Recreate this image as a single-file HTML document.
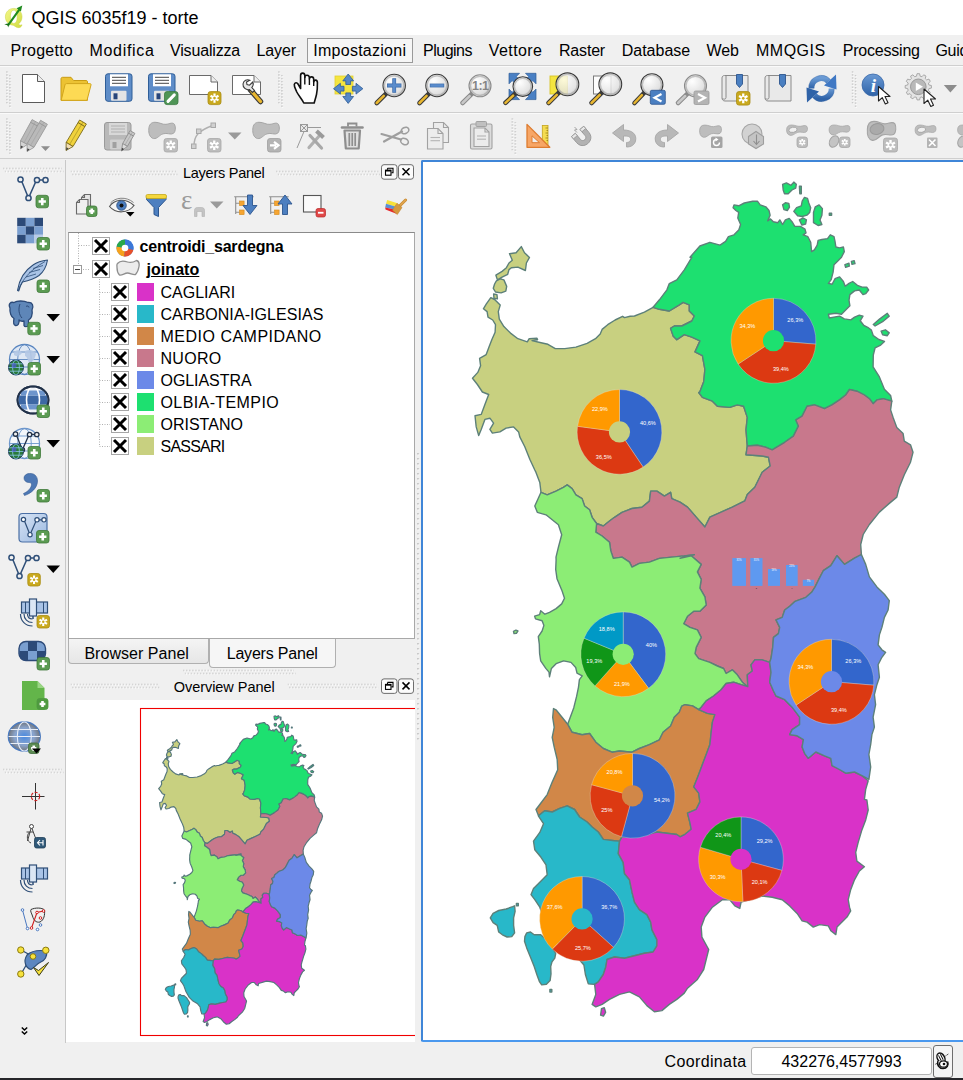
<!DOCTYPE html>
<html><head><meta charset="utf-8"><title>QGIS 6035f19 - torte</title>
<style>
*{box-sizing:border-box;margin:0;padding:0}
html,body{width:963px;height:1080px;overflow:hidden;background:#f0f0f0;font-family:"Liberation Sans","DejaVu Sans",sans-serif;color:#000}
.abs{position:absolute}
#title{left:0;top:0;width:963px;height:35px;background:#fff}
#title span{position:absolute;left:31.5px;top:7.5px;font-size:18px;white-space:nowrap}
#menu{left:0;top:35px;width:963px;height:31px;background:#f0f0f0;border-bottom:1px solid #cfcfcf;box-shadow:0 1px 0 #fafafa}
#menu span{position:absolute;top:7px;font-size:16px;white-space:nowrap}
#impbox{left:306.5px;top:37.5px;width:106px;height:25px;border:1px solid #9a9a9a;background:#f6f6f6}
#tb1{left:0;top:67px;width:963px;height:46px;background:#f0f0f0;border-bottom:1px solid #cfcfcf;box-shadow:0 1px 0 #fafafa}
#tb2{left:0;top:114px;width:963px;height:45px;background:#f0f0f0;border-bottom:1px solid #cfcfcf}
#ltb{left:0;top:160px;width:66px;height:884px;background:#f0f0f0;border-right:1px solid #c8c8c8}
.grip{position:absolute;border-left:2px dotted #c0c0c0;width:4px;border-right:2px dotted #c0c0c0}
.hgrip{position:absolute;height:4px;border-top:1px dotted #b8b8b8;border-bottom:1px dotted #b8b8b8}
#tree{left:68px;top:231.500px;width:347px;height:407px;background:#fff;border:1px solid #a8a8a8;border-top-color:#8a8a8a}
.ptitle{font-size:14.5px;white-space:nowrap}
.row{position:absolute;font-size:16px;white-space:nowrap}
.cb{position:absolute;width:18px;height:18px;border:1px solid #a6a6a6;background:#fff}
.cb svg{position:absolute;left:0;top:0}
.sw{position:absolute;width:17.5px;height:18.5px}
.tab{position:absolute;font-size:15.4px;text-align:center;letter-spacing:.3px}
#ovw{left:66px;top:700px;width:349px;height:342px;background:#fff;overflow:hidden}
#canvas{left:421px;top:160px;width:545px;height:882px;background:#fff;border:2px solid #3f86d8;border-bottom-color:#4a98ee;border-radius:2px}
#status{left:0;top:1043px;width:963px;height:34px;background:#f0f0f0}
#dark{left:0;top:1077.500px;width:963px;height:3px;background:#26262a}
.pl{font-size:5.6px;fill:#fff;text-anchor:middle;font-family:"Liberation Sans",sans-serif}
.btn{position:absolute;width:16px;height:14px;border:1px solid #333;border-radius:3px;background:#fff}
</style></head><body>
<div id="title" class="abs">
<svg class="abs" style="left:3px;top:4px" width="24" height="26" viewBox="3 4 24 26"><defs><linearGradient id="qg" x1="0" y1="0" x2="1" y2="1"><stop offset="0" stop-color="#f4f78a"/><stop offset="1" stop-color="#d0dc40"/></linearGradient></defs><path fill-rule="evenodd" d="M13.800,8.400C18.600,8.400 22,12 22,16.800 22,20 20.600,22.600 18.400,24 19.200,25 20.400,25.600 22,24.800 21.600,27 19.600,28 17.600,27.600 15.800,27.200 14.600,25.800 13.200,25.200 8.600,25 5.400,21.400 5.400,16.800 5.400,12 9,8.400 13.800,8.400ZM13.800,10.200C11.600,10.200 10.400,12.800 10.400,16.800 10.400,20.800 11.600,23.400 13.800,23.400 16,23.400 17.200,20.800 17.200,16.800 17.200,12.800 16,10.200 13.800,10.200Z" fill="url(#qg)" stroke="#c8d23c" stroke-width=".5"/><path d="M8,25.400L20,8.600" stroke="#1f8a1f" stroke-width="2.100"/><path d="M22.300,5.400L16.600,8.200 20.900,11.500Z" fill="#1f8a1f"/><path d="M4.300,24.200L9.200,23.200 8.300,27.600 7.400,25.200Z" fill="#176e17"/></svg>
<span>QGIS 6035f19 - torte</span></div>
<div id="menu" class="abs"><span style="left:10.5px;letter-spacing:0.25px">Progetto</span><span style="left:89.5px;letter-spacing:0.68px">Modifica</span><span style="left:170px;letter-spacing:-0.17px">Visualizza</span><span style="left:256.5px;letter-spacing:-0.11px">Layer</span><span style="left:423px;letter-spacing:-0.50px">Plugins</span><span style="left:488.8px;letter-spacing:0.40px">Vettore</span><span style="left:559px;letter-spacing:-0.19px">Raster</span><span style="left:621.7px;letter-spacing:0.00px">Database</span><span style="left:706.4px;letter-spacing:-0.00px">Web</span><span style="left:756px;letter-spacing:0.49px">MMQGIS</span><span style="left:842.8px;letter-spacing:-0.22px">Processing</span><span style="left:935.5px;letter-spacing:-0.34px">Guida</span></div>
<div id="impbox" class="abs"></div><span class="abs" style="left:313.3px;top:42px;font-size:16px;white-space:nowrap;letter-spacing:0.26px">Impostazioni</span>
<div id="tb1" class="abs"></div>
<div id="tb2" class="abs"></div>
<div id="ltb" class="abs"></div>
<!-- Layers panel -->

<span class="abs ptitle" style="left:183px;top:164.500px;letter-spacing:-0.26px">Layers Panel</span>
<div id="tree" class="abs"></div>
<div id="rows">
<svg class="abs" style="left:68px;top:232px" width="347" height="405" viewBox="68 232 347 405"><g stroke="#b0b0b0" stroke-width="1" stroke-dasharray="1 1.5" fill="none"><path d="M78.500,233V269.500M78.500,245.500H90M83,269.500H90M99.500,279V446.500"/><path d="M99.500,292.5H110"/><path d="M99.500,314.5H110"/><path d="M99.500,336.5H110"/><path d="M99.500,358.5H110"/><path d="M99.500,380.5H110"/><path d="M99.500,402.5H110"/><path d="M99.500,424.5H110"/><path d="M99.500,446.5H110"/></g></svg>
<div class="cb" style="left:91.500px;top:236.500px"><svg width="16" height="16" viewBox="0 0 16 16"><path d="M2 2L14 14M14 2L2 14" stroke="#000" stroke-width="3"/></svg></div>
<svg class="abs" style="left:115.500px;top:239px" width="18" height="18" viewBox="0 0 18 18"><circle cx="9" cy="9" r="8.500" fill="#3b78d8"/><path d="M9 9L9 .5A8.500 8.500 0 0 1 17.300 11z" fill="#3b78d8"/><path d="M9 9L17.300 11A8.500 8.500 0 0 1 8 17.500z" fill="#e8502a"/><path d="M9 9L8 17.500A8.500 8.500 0 0 1 .6 7.500z" fill="#f6a21c"/><path d="M9 9L.6 7.500A8.500 8.500 0 0 1 9 .5z" fill="#2aa84a"/><circle cx="9" cy="9" r="3.300" fill="#fff"/></svg>
<span class="row" style="left:139.500px;top:237.600px;font-weight:bold;letter-spacing:-0.20px">centroidi_sardegna</span>
<div class="abs" style="left:73px;top:265px;width:9px;height:9px;border:1px solid #9a9a9a;background:#fff"><div class="abs" style="left:1px;top:3px;width:5px;height:1px;background:#444"></div></div>
<div class="cb" style="left:91.500px;top:259.500px"><svg width="16" height="16" viewBox="0 0 16 16"><path d="M2 2L14 14M14 2L2 14" stroke="#000" stroke-width="3"/></svg></div>
<svg class="abs" style="left:115px;top:259px" width="26" height="19" viewBox="0 0 26 19"><path d="M2.500 4.500c3-3.500 7-2.500 10-1.500s6.500 0 9-1.500c2 .5 3 3 2.500 6s-1.500 6-3.500 8c-3 .5-5-1.500-8-1.500s-5 2.500-8 2c-2-2-2.500-5-2.500-7.500s-.5-3 .5-4z" fill="#ececec" stroke="#8e8e8e" stroke-width="1.300"/></svg>
<span class="row" style="left:146.500px;top:260.600px;font-weight:bold;text-decoration:underline;letter-spacing:0.05px">joinato</span>
<div class="cb" style="left:111px;top:283px"><svg width="16" height="16" viewBox="0 0 16 16"><path d="M2 2L14 14M14 2L2 14" stroke="#000" stroke-width="3"/></svg></div><div class="sw" style="left:136.500px;top:282.5px;background:#d932c8"></div><span class="row" style="left:160.500px;top:283.8px;letter-spacing:0.01px">CAGLIARI</span>
<div class="cb" style="left:111px;top:305px"><svg width="16" height="16" viewBox="0 0 16 16"><path d="M2 2L14 14M14 2L2 14" stroke="#000" stroke-width="3"/></svg></div><div class="sw" style="left:136.500px;top:304.5px;background:#28b8c9"></div><span class="row" style="left:160.500px;top:305.8px;letter-spacing:0.07px">CARBONIA-IGLESIAS</span>
<div class="cb" style="left:111px;top:327px"><svg width="16" height="16" viewBox="0 0 16 16"><path d="M2 2L14 14M14 2L2 14" stroke="#000" stroke-width="3"/></svg></div><div class="sw" style="left:136.500px;top:326.5px;background:#d18748"></div><span class="row" style="left:160.500px;top:327.8px;letter-spacing:0.50px">MEDIO CAMPIDANO</span>
<div class="cb" style="left:111px;top:349px"><svg width="16" height="16" viewBox="0 0 16 16"><path d="M2 2L14 14M14 2L2 14" stroke="#000" stroke-width="3"/></svg></div><div class="sw" style="left:136.500px;top:348.5px;background:#c8788c"></div><span class="row" style="left:160.500px;top:349.8px;letter-spacing:0.29px">NUORO</span>
<div class="cb" style="left:111px;top:371px"><svg width="16" height="16" viewBox="0 0 16 16"><path d="M2 2L14 14M14 2L2 14" stroke="#000" stroke-width="3"/></svg></div><div class="sw" style="left:136.500px;top:370.5px;background:#6c89e8"></div><span class="row" style="left:160.500px;top:371.8px;letter-spacing:-0.06px">OGLIASTRA</span>
<div class="cb" style="left:111px;top:393px"><svg width="16" height="16" viewBox="0 0 16 16"><path d="M2 2L14 14M14 2L2 14" stroke="#000" stroke-width="3"/></svg></div><div class="sw" style="left:136.500px;top:392.5px;background:#1de070"></div><span class="row" style="left:160.500px;top:393.8px;letter-spacing:0.40px">OLBIA-TEMPIO</span>
<div class="cb" style="left:111px;top:415px"><svg width="16" height="16" viewBox="0 0 16 16"><path d="M2 2L14 14M14 2L2 14" stroke="#000" stroke-width="3"/></svg></div><div class="sw" style="left:136.500px;top:414.5px;background:#8ced75"></div><span class="row" style="left:160.500px;top:415.8px;letter-spacing:0.00px">ORISTANO</span>
<div class="cb" style="left:111px;top:437px"><svg width="16" height="16" viewBox="0 0 16 16"><path d="M2 2L14 14M14 2L2 14" stroke="#000" stroke-width="3"/></svg></div><div class="sw" style="left:136.500px;top:436.5px;background:#c8d080"></div><span class="row" style="left:160.500px;top:437.8px;letter-spacing:-0.77px">SASSARI</span>
</div>
<!-- tabs -->
<div class="tab" style="left:67.500px;top:639px;width:141.500px;height:25px;border:1px solid #b0b0b0;border-top:none;background:linear-gradient(#f4f4f4,#e6e6e6);border-radius:0 0 4px 4px"></div><div class="tab" style="left:208.500px;top:639px;width:127px;height:28.500px;border:1px solid #b0b0b0;border-top:none;background:#f6f6f6;border-radius:0 0 4px 4px"></div><span class="abs" style="left:84.400px;top:644.700px;font-size:16px;white-space:nowrap;letter-spacing:0.04px">Browser Panel</span><span class="abs" style="left:226.700px;top:644.800px;font-size:16px;white-space:nowrap;letter-spacing:-0.20px">Layers Panel</span>


<span class="abs ptitle" style="left:173.700px;top:678.500px;letter-spacing:-0.04px">Overview Panel</span>
<div id="ovw" class="abs">
<svg class="abs" style="left:0;top:0" width="349" height="342" viewBox="66 700 349 342">
<rect x="140.500" y="708.500" width="300" height="327" fill="none" stroke="#f00000" stroke-width="1.1"/>
<g transform="translate(-17.100,647.850) scale(0.372)" stroke="#56777c" stroke-width="3.100" stroke-linejoin="round"><use href="#mapg"/></g>
</svg></div>
<!-- Map canvas -->
<div id="canvas" class="abs">
<svg class="abs" style="left:-2px;top:-2px" width="545" height="882" viewBox="421 160 545 882">
<defs><g id="mapg">
<path fill="#c8d080" d="M490.8,297.6 494.6,299.5 500.2,305.1 498.3,311.6 499.3,319.1 503.9,326.6 510.5,333.1 517.9,338.7 527.3,341.9 529.2,338.7 537,338.2 537.6,339.7 532,340.6 542.2,343 547.9,344.3 555.3,348.6 564.7,348.6 575.9,347.1 587.1,343.4 595.5,338.7 600.2,334.1 602.1,329.4 607.7,324.7 615.1,320 622.6,316.3 624.5,317.6 630.1,316.3 634.5,316 644.4,312.2 653.1,307.3 659.4,309.3 669.3,311 679.3,304.8 683.1,302.3 689.3,304.8 689.3,311 694.3,316 691.8,321 681.8,326 674.3,326 670.6,328.4 673.1,335.9 676.8,339.7 684.3,334.7 691.8,337.2 700,340.9 695,351.9 702.4,355.7 704.9,369.4 703.7,381.8 699.9,391.8 698.7,392.5 702.4,397.4 712.4,401.2 717.4,406.2 729.8,407.4 737.3,404.9 743.6,406.2 747.3,417.4 746,429.8 747.3,446 746,454.8 762.2,456 768.5,457.3 770.2,466 762.2,472.2 758.5,479.7 754.8,487.2 747.3,494.6 744.8,500.9 732.3,507.1 721.1,512.1 709.9,517.1 704.9,527 696.2,517.1 687.5,507.1 680,502.1 671.8,498.6 670.6,492.3 664.4,496.1 656.9,491.1 650.7,491.1 649.4,501.1 641.9,507.3 632,508.5 622,512.3 614.5,517.3 609.5,521 603.3,526 596.6,523.5 592.1,517.3 589.6,509.8 584.6,506 582.1,498.6 575.9,494.8 572.1,488.6 567.2,484.9 563.4,487.4 556,491.1 547.2,494.8 541,492.3 539.8,482.4 536,472.4 534.8,470 529.8,459.3 524.8,446.8 519.8,436.9 518.6,431.9 513.6,426.9 506.1,428.1 499.9,431.9 492.4,433.1 489.9,429.4 493.6,423.1 489.9,418.2 484.9,419.4 481.2,429.4 478.7,435.6 476.2,426.9 475,415.7 481.2,414.4 484.9,404.5 488.7,394.5 482.4,392 477.4,384.5 472.5,378.3 477.8,372.4 480.6,365.8 479.6,358.4 486.2,354.6 489,347.1 491.8,339.7 495.1,332.2 495.5,324.7 492.7,320 488,317.2 487.1,311.6 483.4,308.8 486.2,304.2Z M521.3,246.6 524.5,252.8 529.5,257.4 526.4,263 525.4,270.5 517.9,267.1 511.4,267.7 509,269.6 507.7,274.3 502.1,277.1 497.4,279.9 495.9,275.2 502.1,271.4 506.4,267.7 509,263 512.3,260.2 509.5,253.7 516.1,252.8Z M496.4,280.8 500.2,278.9 503.9,279.9 506.7,286.4 505.8,291.1 501.1,292.9 495.5,292 493.3,288.3 494.6,284Z M493.6,293.9 497,294.8 497.4,298.9 494,298.2Z"/>
<path fill="#1de070" d="M653.1,307.3 659.4,299.8 666.9,289.8 669.3,283.6 676.8,279.8 684.3,269.9 691.8,257.4 690,257.2 699.9,246 709.9,242.3 720,245.1 725.6,241.4 728.4,236.7 734,234.8 738.7,230.1 740.6,224.5 737.8,218 738.7,212.4 735.9,210.5 733.1,207.7 734,204.9 738.7,205.8 744.3,203 752.7,201.2 757.4,201.2 760.2,204.9 765.8,206.8 769,210.5 770.1,215.2 767.7,220.8 770.5,218.9 773.3,221.7 777.9,222.7 779.8,219.9 782.6,224.5 785.4,219.9 789.2,218.4 792,221.7 794.8,226.4 800.4,226.4 805,229.2 806,232.9 803.2,234.8 807.9,236.7 810.7,242.3 811.6,251.6 814.4,249.8 817.2,245.1 818.1,240.4 821.9,239.5 827.5,238.6 830.3,234.8 834,236.7 835,241.4 835.9,247 839.6,247.9 843.4,247 844.3,251.6 841.5,257.2 837.8,261 834,264.7 833.1,272.2 831.2,279.7 828.4,283.4 832.1,284.3 835,278.7 839.6,276.9 843.4,281.5 845.2,286.2 849,283.4 852.7,281.5 857.4,285.3 862.1,287.1 866.7,287.1 868.6,290 865.8,293.7 863,294.6 859.3,290 854.6,290.9 849.9,294.6 849,300.2 849.9,305.8 845.2,310.5 841.5,314.3 835.9,313.3 828.4,314.3 829.3,318 839.6,316.1 844.3,318.9 850.8,319.9 854.6,317.1 859.3,315.2 863,316.1 860.2,320.8 863.9,325.5 867.7,327.3 871.4,330.1 873.3,335.7 878.9,339.5 884.5,341.4 880.7,345.1 875.1,347.9 873.3,355 873.1,366.9 879.4,376.9 884.4,389.3 890.6,395.5 891.8,401.2 883.1,398.7 876.9,399.9 873.1,403.7 869.4,398.7 864.4,395 856.9,391.2 849.5,389.5 845.7,395 839.5,399.9 832,404.9 824.5,408.7 814.6,404.9 807.1,406.2 802.1,416.1 795.9,419.9 798.4,426.1 793.4,436.1 784.7,442.3 772.2,449.8 766,447.3 757.3,445.3 747.3,446 746,429.8 747.3,417.4 743.6,406.2 737.3,404.9 729.8,407.4 717.4,406.2 712.4,401.2 702.4,397.4 698.7,392.5 699.9,391.8 703.7,381.8 704.9,369.4 702.4,355.7 695,351.9 700,340.9 691.8,337.2 684.3,334.7 676.8,339.7 673.1,335.9 670.6,328.4 674.3,326 681.8,326 691.8,321 694.3,316 689.3,311 689.3,304.8 683.1,302.3 679.3,304.8 669.3,311 659.4,309.3 653.1,307.3Z M782.6,184.3 786.4,182.9 791,185.3 793.8,182.1 796.3,184.3 795.7,188.1 792,190 788.2,193.7 784.5,193.7 783.2,190Z M782.6,204.9 785.4,202.7 788.8,203.4 789.5,207.1 787.3,210.5 783.9,209.6Z M793.8,211.4 796.6,207.7 801.3,205.8 802.2,201.2 804.5,197.4 807.5,198.4 808.8,203 810.7,207.7 809.7,212.4 806.9,215.2 802.2,216.5 797.6,215.7Z M813.5,212.4 815.3,206.8 819.1,204.9 822.4,208.6 821.9,215.2 820,219.9 821.9,224.5 818.1,225.5 813.5,222.7Z M799.4,219.9 803.2,218 806.4,219.9 805.6,224 801.9,225.1Z M844.9,264.7 849,263.2 849.3,266.2 845.6,267.3Z M851.4,261.4 854.2,260.6 855,263.6 852,264.3Z M873.3,324.5 879.8,318.9 887.3,313.3 889.2,316.1 882.6,321.7 875.1,326Z M881.1,331.1 885.4,329.8 889.2,332.9 887.3,335.7 882.6,334.8Z M799.4,186.2 801.3,186.2 801.3,193.7 799.8,193.7Z M829.3,213.3 831.6,213.3 831.6,215.2 829.3,215.2Z"/>
<path fill="#c8788c" d="M747.3,446 757.3,445.3 766,447.3 772.2,449.8 784.7,442.3 793.4,436.1 798.4,426.1 795.9,419.9 802.1,416.1 807.1,406.2 814.6,404.9 824.5,408.7 832,404.9 839.5,399.9 845.7,395 849.5,389.5 856.9,391.2 864.4,395 869.4,398.7 873.1,403.7 876.9,399.9 883.1,398.7 891.8,401.2 890.6,409.9 893.1,417.4 896.8,427.4 903.1,433.6 904.3,441.1 910.5,444.8 913,452.3 910.5,462.2 904.3,474.7 899.3,487.2 896.8,497.1 889.3,503.4 879.4,512.1 869.4,524.5 863.2,534.5 860.7,544.5 861.4,554.5 854.5,558.2 844.5,564.4 837,555.7 830.8,565.7 823.3,570.7 818.8,579.4 815.1,586.9 811.6,592.3 805.9,597.3 795.1,601.3 789.7,606.2 784.7,610 782.2,617.4 776,619.9 779.7,627.4 778.4,633.6 773.5,637.4 772.7,647.4 771,658.6 769.7,662.3 762.2,659.8 754.8,659.8 751,664.8 752.3,671 747.3,674.8 747.8,686.7 742.3,682.2 737.3,674.8 732.3,669.8 726.1,673.5 723.6,668.5 717.4,666 709.9,662.3 698.7,658.6 695,653.6 696.2,647.4 701.2,637.4 697.4,629.9 690,627.4 683.7,623.7 687.5,616.2 693.7,611.2 699.9,611.2 706.2,605 704.9,596.8 699.9,588.1 701.2,579.4 697.4,571.9 701.2,564.4 691.2,555.7 680,558.2 694.3,554.6 684.3,555.9 671.8,557.1 659.4,558.4 649.4,562.1 639.4,563.4 632,567.1 629.5,562.1 622,557.1 613.3,558.4 610.8,550.9 609.5,542.2 602.1,536 595.8,532.2 596.6,523.5 603.3,526 609.5,521 614.5,517.3 622,512.3 632,508.5 641.9,507.3 649.4,501.1 650.7,491.1 656.9,491.1 664.4,496.1 670.6,492.3 671.8,498.6 680,502.1 687.5,507.1 696.2,517.1 704.9,527 709.9,517.1 721.1,512.1 732.3,507.1 744.8,500.9 747.3,494.6 754.8,487.2 758.5,479.7 762.2,472.2 770.2,466 768.5,457.3 762.2,456 746,454.8 747.3,446Z"/>
<path fill="#8ced75" d="M541,492.3 534.8,506 537.3,512.3 546,514.8 552.2,519.8 558.4,524.7 561.7,534.7 558.4,547.2 556,557.1 556.1,560 555.7,569.3 557,578.7 561.7,589.9 564.5,598.3 561.7,603.9 556.1,608.6 549.5,612.3 544.9,614.2 540.7,610.8 539.6,614.6 534.6,616.1 535.5,618.9 542.1,620.7 543.9,625.4 542.1,631 538.3,636.6 539.3,644.1 539.6,653.5 540.7,660.9 545.8,668.4 549,672.1 549.5,676.8 551.4,668.4 556.1,663.7 563.6,660.9 571,662.4 575.7,667.5 577,673.1 582.2,675.9 579.4,679.6 578.5,687.1 576.6,696.4 573.8,707.7 567.7,724.3 572.1,732.3 582.1,734.8 589.6,733.5 595.8,742.2 603.3,748.5 612,752.2 619.5,751 632,752.2 639.4,748.5 649.4,744.7 659.4,739.8 663.1,732.3 670.6,726 674.3,717.3 679.3,712.3 681.8,706.1 685,704.7 692.5,705.9 698.7,709.7 701.2,707.2 706.2,700.9 713.6,696 721.1,689.7 726.1,683.5 733.6,682.2 741.1,684.7 747.8,686.7 742.3,682.2 737.3,674.8 732.3,669.8 726.1,673.5 723.6,668.5 717.4,666 709.9,662.3 698.7,658.6 695,653.6 696.2,647.4 701.2,637.4 697.4,629.9 690,627.4 683.7,623.7 687.5,616.2 693.7,611.2 699.9,611.2 706.2,605 704.9,596.8 699.9,588.1 701.2,579.4 697.4,571.9 701.2,564.4 691.2,555.7 680,558.2 694.3,554.6 684.3,555.9 671.8,557.1 659.4,558.4 649.4,562.1 639.4,563.4 632,567.1 629.5,562.1 622,557.1 613.3,558.4 610.8,550.9 609.5,542.2 602.1,536 595.8,532.2 596.6,523.5 592.1,517.3 589.6,509.8 584.6,506 582.1,498.6 575.9,494.8 572.1,488.6 567.2,484.9 563.4,487.4 556,491.1 547.2,494.8 541,492.3Z M513.5,631.4 515.9,630.1 517.9,631 516.4,633.3 514,633.6Z"/>
<path fill="#d18748" d="M567.7,724.3 556,709.8 553.5,708.6 552.7,717.3 554.2,727.3 552.2,737.3 554.2,747.2 557.2,759.7 557.7,769.7 552.2,782.1 547.2,794.6 539.8,804.5 536,809.5 538.5,815.8 544.7,810.8 552.2,812 559.7,808.3 567.2,805.8 574.6,809.5 579.6,817 587.1,822 592.1,827 598.3,832 603.3,839.4 614.5,840.7 619.5,841.4 622,836.9 634.5,837.4 646.9,834.5 656.9,832 666.9,833.2 676.8,834.5 680,836.8 685,834.3 691.2,829.3 690,823.1 687.5,813.1 696.2,809.3 699.9,801.9 698.7,793.1 693.7,786.9 698.7,774.5 702.4,764.5 706.2,754.5 709.9,744.5 711.2,732.1 712.4,722.1 714.9,714.6 707.4,713.4 698.7,709.7 692.5,705.9 685,704.7 681.8,706.1 679.3,712.3 674.3,717.3 670.6,726 663.1,732.3 659.4,739.8 649.4,744.7 639.4,748.5 632,752.2 619.5,751 612,752.2 603.3,748.5 595.8,742.2 589.6,733.5 582.1,734.8 572.1,732.3 567.7,724.3Z"/>
<path fill="#28b8c9" d="M538.5,816.2 543.5,823.7 539.8,832.4 533.5,841.1 534.8,849.8 541,857.3 546,864.8 547.2,874.8 539.8,882.2 533.5,888.5 531,894.7 534.8,899.7 539.8,907.2 546,924.6 554.7,939.6 564.7,949.5 577.1,957 583.9,965 585.4,974.5 588.3,983.9 594.6,984.4 598.3,981.9 603.3,974.5 605.8,967 607,959.5 614.5,957 624.5,958.3 634.5,955.8 644.4,953.3 653.1,952 656.9,945.8 656.9,939.6 651.9,929.6 650.7,922.1 646.9,914.6 639.4,909.7 634.5,902.2 632,892.2 629.5,879.8 624.5,873.5 623.2,862.3 618.3,853.6 619.5,841.1 614.5,840.7 603.3,839.4 598.3,832 592.1,827 587.1,822 579.6,817 574.6,809.5 567.2,805.8 559.7,808.3 552.2,812 544.7,810.8 538.5,815.8Z M524.9,936.6 526.7,932.9 530.5,932 534.2,934.8 540.7,934.8 547.3,940.4 553.3,949.3 555.7,953.5 554.8,958.1 552,961.9 550.7,966.5 551,974 550.1,980.6 546.4,984.3 541.7,984.9 539.4,981.5 537,975 534.2,966.5 530.5,957.2 526.7,947.9 524.5,941.3Z M490.3,917.9 493.1,913.3 498.7,910.5 506.2,909 512.7,906.7 514.6,905.8 515.1,911.4 513.6,917.9 513.6,925.4 514.6,932.9 511.8,936.6 507.1,937 502.4,934.8 498.7,932 497.2,925.4 493.1,922.6Z M516.4,903.4 518.3,903.4 518.3,905.8 516.4,905.8Z M549.9,989.5 551.8,989.5 551.8,992.1 549.9,992.1Z"/>
<path fill="#d932c8" d="M594.6,984.4 595.8,994.4 592.1,1004.4 595.8,1006.9 602.1,1004.4 609.5,999.4 619.5,994.4 629.5,991.9 639.4,996.9 646.9,1005.6 654.4,1011.8 661.9,1010.6 669.3,1004.4 676.8,999.4 684.3,993.1 687.5,988.2 697.4,979.4 703.7,969.5 706.2,959.5 708.7,949.5 701.9,937.1 701.2,927.1 704.9,917.1 712.4,907.2 722.4,899.7 729.8,899.7 734.8,905.9 739.8,908.4 741.1,902.2 762.2,896 772.2,897.2 782.2,899.7 789.7,905.9 797.1,913.4 802.1,920.9 807.1,922.1 813.3,927.1 819.6,924.6 828.3,925.9 830.8,930.8 835.8,934.6 837,927.1 842,922.1 847,917.1 850.7,910.9 849.5,907.2 848.2,899.7 850.7,889.7 854.5,879.8 859.4,871 864.4,866.8 856.9,861.1 855.7,852.3 858.2,842.4 861.9,829.9 865.7,819.9 868.2,810 866.9,800 864.4,799.4 865.7,789.4 868.2,780.7 861.9,775.7 854.5,772 845.7,773.2 839.5,769.5 832,765.7 830.8,758.3 824.5,755.8 815.8,752 808.3,758.3 804.6,753.3 802.1,747 803.4,739.6 797.1,735.8 789.7,734.6 792.1,729.6 799.6,724.6 799.6,717.1 792.1,707.2 784.7,699.7 776,696 773.5,691 769.7,682.2 771,672.3 769.7,662.3 762.2,659.8 754.8,659.8 751,664.8 752.3,671 747.3,674.8 747.8,686.7 741.1,684.7 733.6,682.2 726.1,683.5 721.1,689.7 713.6,696 706.2,700.9 701.2,707.2 698.7,709.7 707.4,713.4 714.9,714.6 712.4,722.1 711.2,732.1 709.9,744.5 706.2,754.5 702.4,764.5 698.7,774.5 693.7,786.9 698.7,793.1 699.9,801.9 696.2,809.3 687.5,813.1 690,823.1 691.2,829.3 685,834.3 680,836.8 676.8,834.5 666.9,833.2 656.9,832 646.9,834.5 634.5,837.4 622,836.9 619.5,841.4 618.3,853.6 623.2,862.3 624.5,873.5 629.5,879.8 632,892.2 634.5,902.2 639.4,909.7 646.9,914.6 650.7,922.1 651.9,929.6 656.9,939.6 656.9,945.8 653.1,952 644.4,953.3 634.5,955.8 624.5,958.3 614.5,957 607,959.5 605.8,967 603.3,974.5 598.3,981.9 594.6,984.4Z M601.5,1008.6 604.3,1007.7 605.6,1012.3 603.4,1016.1 600.6,1015.1Z"/>
<path fill="#6c89e8" d="M861.4,554.5 865.7,564.4 869.4,576.9 876.9,586.9 884.4,594.3 889.3,600.6 888.1,610 884.4,617.4 881.9,627.4 879.4,634.9 878.1,644.9 881.9,649.8 885.6,652.3 881.9,657.3 878.1,664.8 879.4,677.3 876.9,684.7 874.4,694.7 875.6,704.7 873.1,717.1 874.4,727.1 871.9,734.6 870.7,744.5 868.9,754.5 870.7,767 868.9,779.4 861.9,775.7 854.5,772 845.7,773.2 839.5,769.5 832,765.7 830.8,758.3 824.5,755.8 815.8,752 808.3,758.3 804.6,753.3 802.1,747 803.4,739.6 797.1,735.8 789.7,734.6 792.1,729.6 799.6,724.6 799.6,717.1 792.1,707.2 784.7,699.7 776,696 773.5,691 769.7,682.2 771,672.3 769.7,662.3 771,658.6 772.7,647.4 773.5,637.4 778.4,633.6 779.7,627.4 776,619.9 782.2,617.4 784.7,610 789.7,606.2 795.1,601.3 805.9,597.3 811.6,592.3 815.1,586.9 818.8,579.4 823.3,570.7 830.8,565.7 837,555.7 844.5,564.4 854.5,558.2 861.4,554.5Z"/>
</g></defs>
<g stroke="#5d8079" stroke-width="1.4" stroke-linejoin="round"><use href="#mapg"/></g>
<g fill="#5e99f0"><rect x="732.3" y="558.1" width="13.7" height="27.8"/><rect x="750.3" y="558.1" width="12.2" height="27.8"/><rect x="768" y="569" width="12" height="16.9"/><rect x="786" y="565" width="11.7" height="20.9"/><rect x="802.8" y="579.8" width="11.4" height="6.1"/></g><g font-family="Liberation Sans,sans-serif" font-size="2.6" text-anchor="middle"><text x="739.1" y="560.5" fill="#fff">31%</text><text x="756.4" y="560.5" fill="#fff">31%</text><text x="774.0" y="571.4" fill="#fff">19%</text><text x="791.9" y="567.4" fill="#fff">23%</text><text x="808.5" y="582.2" fill="#fff">7%</text><text x="756.4" y="589.3" fill="#222" font-size="2.2">2</text><text x="791.9" y="589.3" fill="#222" font-size="2.2">4</text></g>
<path d="M773.5,340.7L773.5,298.3A42.4,42.4 0 0 1 815.8,344.2Z" fill="#3366cc" stroke="#e8e0d0" stroke-width=".35"/>
<text x="795.3" y="322.4" class="pl">26,3%</text>
<path d="M773.5,340.7L815.8,344.2A42.4,42.4 0 0 1 738.1,364.1Z" fill="#dc3912" stroke="#e8e0d0" stroke-width=".35"/>
<text x="780.9" y="371.2" class="pl">39,4%</text>
<path d="M773.5,340.7L738.1,364.1A42.4,42.4 0 0 1 773.5,298.3Z" fill="#ff9900" stroke="#e8e0d0" stroke-width=".35"/>
<text x="747.4" y="328.4" class="pl">34,3%</text>
<circle cx="773.5" cy="340.7" r="10.6" fill="#1de070"/>
<path d="M619.5,431.9L619.5,389.5A42.4,42.4 0 0 1 643.1,467.1Z" fill="#3366cc" stroke="#e8e0d0" stroke-width=".35"/>
<text x="647.9" y="425.1" class="pl">40,6%</text>
<path d="M619.5,431.9L643.1,467.1A42.4,42.4 0 0 1 577.5,426.3Z" fill="#dc3912" stroke="#e8e0d0" stroke-width=".35"/>
<text x="603.8" y="458.9" class="pl">36,5%</text>
<path d="M619.5,431.9L577.5,426.3A42.4,42.4 0 0 1 619.5,389.5Z" fill="#ff9900" stroke="#e8e0d0" stroke-width=".35"/>
<text x="599.9" y="411.4" class="pl">22,9%</text>
<circle cx="619.5" cy="431.9" r="10.6" fill="#c8d080"/>
<path d="M623.2,654.3L623.2,611.9A42.4,42.4 0 0 1 648.6,688.3Z" fill="#3366cc" stroke="#e8e0d0" stroke-width=".35"/>
<text x="651.4" y="646.8" class="pl">40%</text>
<path d="M623.2,654.3L648.6,688.3A42.4,42.4 0 0 1 595.0,685.9Z" fill="#ff9900" stroke="#e8e0d0" stroke-width=".35"/>
<text x="621.9" y="685.8" class="pl">21,9%</text>
<path d="M623.2,654.3L595.0,685.9A42.4,42.4 0 0 1 584.0,638.2Z" fill="#109618" stroke="#e8e0d0" stroke-width=".35"/>
<text x="594.3" y="662.8" class="pl">19,3%</text>
<path d="M623.2,654.3L584.0,638.2A42.4,42.4 0 0 1 623.2,611.9Z" fill="#0099c6" stroke="#e8e0d0" stroke-width=".35"/>
<text x="606.7" y="631.4" class="pl">18,8%</text>
<circle cx="623.2" cy="654.3" r="10.6" fill="#8ced75"/>
<path d="M831.5,681.7L831.5,639.3A42.4,42.4 0 0 1 873.8,685.2Z" fill="#3366cc" stroke="#e8e0d0" stroke-width=".35"/>
<text x="853.3" y="663.4" class="pl">26,3%</text>
<path d="M831.5,681.7L873.8,685.2A42.4,42.4 0 0 1 796.1,705.1Z" fill="#dc3912" stroke="#e8e0d0" stroke-width=".35"/>
<text x="838.9" y="712.2" class="pl">39,4%</text>
<path d="M831.5,681.7L796.1,705.1A42.4,42.4 0 0 1 831.5,639.3Z" fill="#ff9900" stroke="#e8e0d0" stroke-width=".35"/>
<text x="805.4" y="669.4" class="pl">34,3%</text>
<circle cx="831.5" cy="681.7" r="10.6" fill="#6c89e8"/>
<path d="M632.5,795.8L632.5,753.4A42.4,42.4 0 1 1 621.4,836.7Z" fill="#3366cc" stroke="#e8e0d0" stroke-width=".35"/>
<text x="661.9" y="801.5" class="pl">54,2%</text>
<path d="M632.5,795.8L621.4,836.7A42.4,42.4 0 0 1 591.6,784.7Z" fill="#dc3912" stroke="#e8e0d0" stroke-width=".35"/>
<text x="606.8" y="812.4" class="pl">25%</text>
<path d="M632.5,795.8L591.6,784.7A42.4,42.4 0 0 1 632.5,753.4Z" fill="#ff9900" stroke="#e8e0d0" stroke-width=".35"/>
<text x="614.5" y="774.0" class="pl">20,8%</text>
<circle cx="632.5" cy="795.8" r="10.6" fill="#d18748"/>
<path d="M741.0,859.3L741.0,816.9A42.4,42.4 0 0 1 781.9,870.4Z" fill="#3366cc" stroke="#e8e0d0" stroke-width=".35"/>
<text x="764.6" y="843.1" class="pl">29,2%</text>
<path d="M741.0,859.3L781.9,870.4A42.4,42.4 0 0 1 742.9,901.7Z" fill="#dc3912" stroke="#e8e0d0" stroke-width=".35"/>
<text x="759.6" y="884.3" class="pl">20,1%</text>
<path d="M741.0,859.3L742.9,901.7A42.4,42.4 0 0 1 700.4,847.2Z" fill="#ff9900" stroke="#e8e0d0" stroke-width=".35"/>
<text x="717.6" y="879.4" class="pl">30,3%</text>
<path d="M741.0,859.3L700.4,847.2A42.4,42.4 0 0 1 741.0,816.9Z" fill="#109618" stroke="#e8e0d0" stroke-width=".35"/>
<text x="723.3" y="837.3" class="pl">20,4%</text>
<circle cx="741.0" cy="859.3" r="10.6" fill="#d932c8"/>
<path d="M582.1,918.9L582.1,876.5A42.4,42.4 0 0 1 613.5,947.3Z" fill="#3366cc" stroke="#e8e0d0" stroke-width=".35"/>
<text x="609.2" y="908.7" class="pl">36,7%</text>
<path d="M582.1,918.9L613.5,947.3A42.4,42.4 0 0 1 552.3,949.1Z" fill="#dc3912" stroke="#e8e0d0" stroke-width=".35"/>
<text x="582.9" y="950.4" class="pl">25,7%</text>
<path d="M582.1,918.9L552.3,949.1A42.4,42.4 0 0 1 582.1,876.5Z" fill="#ff9900" stroke="#e8e0d0" stroke-width=".35"/>
<text x="554.6" y="909.4" class="pl">37,6%</text>
<circle cx="582.1" cy="918.9" r="10.6" fill="#28b8c9"/>
</svg></div>
<div id="status" class="abs">
<span class="abs" style="left:664.500px;top:10px;font-size:16px;white-space:nowrap;letter-spacing:0.37px">Coordinata</span>
<div class="abs" style="left:751px;top:4px;width:181px;height:27.500px;background:#fff;border:1px solid #b4b4b4;border-radius:3px;font-size:16px;text-align:center;padding-top:5px">432276,4577993</div>
<div class="abs" style="left:933px;top:2px;width:19.600px;height:32.500px;border:1px solid #6e6e6e;border-radius:3px;background:#f5f5f5"></div>
</div>
<div id="dark" class="abs"></div>
<svg class="abs" style="left:0;top:0;pointer-events:none" width="963" height="1080" viewBox="0 0 963 1080">
<defs><pattern id="vd" width="3" height="3.07" patternUnits="userSpaceOnUse"><rect x="1" y="1" width="1.3" height="1.3" fill="#fff"/><rect width="1.4" height="1.4" fill="#bcbcbc"/></pattern><pattern id="vd5" width="3" height="5" patternUnits="userSpaceOnUse"><rect x="1" y="1" width="1.3" height="1.3" fill="#fff"/><rect width="1.5" height="1.5" fill="#b4b4b4"/></pattern><pattern id="hd" width="3.07" height="3" patternUnits="userSpaceOnUse"><rect x="1" y="1" width="1.3" height="1.3" fill="#fff"/><rect width="1.4" height="1.4" fill="#c6c6c6"/></pattern><radialGradient id="lg" cx=".35" cy=".3" r=".8"><stop offset="0" stop-color="#ffffff"/><stop offset=".7" stop-color="#e2e2e2"/><stop offset="1" stop-color="#c4c4c4"/></radialGradient><linearGradient id="vb" x1="0" y1="0" x2="1" y2="1"><stop offset="0" stop-color="#d8e4f4"/><stop offset="1" stop-color="#9ab8e0"/></linearGradient><radialGradient id="gg" cx=".5" cy=".5" r=".55"><stop offset="0" stop-color="#4a8ae0"/><stop offset=".55" stop-color="#8aa4cc"/><stop offset="1" stop-color="#6a6a6a"/></radialGradient><linearGradient id="bl" x1="0" y1="0" x2="0" y2="1"><stop offset="0" stop-color="#6a9ad4"/><stop offset="1" stop-color="#2f63a8"/></linearGradient></defs>
<g transform="translate(6.2,71.2)"><rect width="2.4" height="33.17" fill="url(#vd)"/></g><g transform="translate(9.2,74.8)"><rect width="2.4" height="33.17" fill="url(#vd)"/></g>
<g transform="translate(278.2,71.2)"><rect width="2.4" height="33.17" fill="url(#vd)"/></g><g transform="translate(281.2,74.8)"><rect width="2.4" height="33.17" fill="url(#vd)"/></g>
<g transform="translate(851.6,71.2)"><rect width="2.4" height="33.17" fill="url(#vd)"/></g><g transform="translate(854.6,74.8)"><rect width="2.4" height="33.17" fill="url(#vd)"/></g>
<path d="M22.500,74.500H37.500L44.500,81.500V102.500H22.500Z" fill="#fff" stroke="#5a5a5a"/><path d="M37.500,74.500V81.500H44.500" fill="#eee" stroke="#5a5a5a"/>
<path d="M61,79C61,78 61.500,77.300 62.500,77.300H71L73.500,80.500H86C87,80.500 87.500,81 87.500,82V100.300H61Z" fill="#ecc233" stroke="#c99c14"/><path d="M61.200,100.300L65,84.800C65.200,84 65.600,83.600 66.500,83.600H89.800C90.800,83.600 91.200,84.200 91,85L87,100.300Z" fill="#fdda54" stroke="#d2a51c"/>
<g transform="translate(105,73.3)"><rect x=".5" y=".5" width="26.5" height="27.5" rx="2.5" fill="#5f8dc8" stroke="#2f5e98"/><rect x="5" y="1" width="18" height="12" fill="#fff"/><path d="M7,4H21M7,7H21M7,10H21" stroke="#6a6a6a" stroke-width="1.2"/><rect x="6" y="17.500" width="15.500" height="10" rx="1" fill="#e4e4e4"/><rect x="8.500" y="20" width="4" height="6" fill="#27457a"/></g>
<g transform="translate(148,73.3)"><rect x=".5" y=".5" width="26.5" height="27.5" rx="2.5" fill="#5f8dc8" stroke="#2f5e98"/><rect x="5" y="1" width="18" height="12" fill="#fff"/><path d="M7,4H21M7,7H21M7,10H21" stroke="#6a6a6a" stroke-width="1.2"/><rect x="6" y="17.500" width="15.500" height="10" rx="1" fill="#e4e4e4"/><rect x="8.500" y="20" width="4" height="6" fill="#27457a"/></g>
<g transform="translate(164.500,91.600)"><rect width="13.500" height="13" rx="2.500" fill="#4f9556" stroke="#3a7a40" stroke-width=".8"/><path d="M3.500,9.800L9.800,3.300" stroke="#fff" stroke-width="3" stroke-linecap="round"/></g>
<path d="M189.500,75.500H211L217.500,82V94.500H189.500Z" fill="#fff" stroke="#6a6a6a"/><path d="M211,75.500V82H217.500" fill="#eee" stroke="#6a6a6a"/>
<g transform="translate(208,91.6)"><rect width="13" height="13" rx="2.5" fill="#c9a91e" stroke="#a88c12" stroke-width=".8"/><path d="M6.50,11.10L6.50,1.90M10.48,8.80L2.52,4.20M10.48,4.20L2.52,8.80" stroke="#fff" stroke-width="2.21"/><circle cx="6.5" cy="6.5" r="1.30" fill="#c9a91e"/></g>
<path d="M232.500,75.500H254L260.500,82V94.500H232.500Z" fill="#fff" stroke="#6a6a6a"/><path d="M254,75.500V82H260.500" fill="#eee" stroke="#6a6a6a"/>
<path d="M250.500,90L260.500,101.500" stroke="#3a3a3a" stroke-width="5.500" stroke-linecap="round"/><path d="M251.500,91L260.500,101.500" stroke="#e9b730" stroke-width="3.300" stroke-linecap="round"/><path d="M249.800,80.200C247,79 243.500,80.500 243,84 242.700,87.500 246,90.500 249.500,89.500L252.500,92.500 254.500,90.500 251.800,87.500C253.500,85.500 253.500,83.500 252.800,82L249.500,85.200 247,84.500 246.500,82Z" fill="#e6e6e6" stroke="#3a3a3a" stroke-width="1.100"/>
<path d="M303.800,103C302,99 298.500,95.500 296.800,92 295.500,89 294,86.500 294.300,84.500 294.800,82.300 297,82.300 298,84L300.600,88.500V75.500C300.600,72.300 304.700,72.300 304.800,75.500V77.500C305,74.500 309.300,74.600 309.400,77.800V79C309.700,76 313.600,76.200 313.700,79.200V82C314,79.300 317.400,79.600 317.400,82.500 317.500,87 317.300,91 316.500,94.500 315.800,97.500 315,100 314.200,103Z" fill="#fff" stroke="#111" stroke-width="1.600" stroke-linejoin="round"/><path d="M304.800,77V84.500M309.400,78.500V85M313.700,81V86" stroke="#111" stroke-width="1.400" fill="none"/>
<rect x="335" y="76" width="18" height="18" fill="#f5e53f" stroke="#e2cf30" stroke-width=".8"/>
<g fill="#5588c8" stroke="#2f5c96" stroke-width=".8" stroke-linejoin="round"><path transform="rotate(0 348.2 88.7)" d="M348.2,74.0L353.59999999999997,80.9H350.59999999999997V84.5H345.8V80.9H342.8Z"/><path transform="rotate(90 348.2 88.7)" d="M348.2,74.0L353.59999999999997,80.9H350.59999999999997V84.5H345.8V80.9H342.8Z"/><path transform="rotate(180 348.2 88.7)" d="M348.2,74.0L353.59999999999997,80.9H350.59999999999997V84.5H345.8V80.9H342.8Z"/><path transform="rotate(270 348.2 88.7)" d="M348.2,74.0L353.59999999999997,80.9H350.59999999999997V84.5H345.8V80.9H342.8Z"/></g>
<path d="M385.9,93.8L376.7,103.0" stroke="#3a3a3a" stroke-width="4.6" stroke-linecap="round"/><path d="M383.8,95.9L376.7,103.0" stroke="#e9b730" stroke-width="2.5" stroke-linecap="round"/><circle cx="394.2" cy="85.5" r="11.2" fill="url(#lg)" stroke="#3a3a3a" stroke-width="1.1"/><circle cx="394.2" cy="85.5" r="9.799999999999999" fill="none" stroke="#9a9a9a" stroke-width="1.5" opacity=".55"/>
<path d="M394.200,78.300V92.700M387,85.500H401.400" stroke="#3a69a8" stroke-width="3.800"/><path d="M394.200,78.900V92.100M387.600,85.500H400.800" stroke="#5a8ccc" stroke-width="2.600"/>
<path d="M428.7,93.8L419.5,103.0" stroke="#3a3a3a" stroke-width="4.6" stroke-linecap="round"/><path d="M426.6,95.9L419.5,103.0" stroke="#e9b730" stroke-width="2.5" stroke-linecap="round"/><circle cx="437" cy="85.5" r="11.2" fill="url(#lg)" stroke="#3a3a3a" stroke-width="1.1"/><circle cx="437" cy="85.5" r="9.799999999999999" fill="none" stroke="#9a9a9a" stroke-width="1.5" opacity=".55"/>
<path d="M429.800,85.500H444.200" stroke="#3a69a8" stroke-width="3.800"/><path d="M430.400,85.500H443.600" stroke="#5a8ccc" stroke-width="2.600"/>
<path d="M471.8,93.9L462.5,103.0" stroke="#8a8a8a" stroke-width="4.6" stroke-linecap="round"/><path d="M469.7,96.0L462.5,103.0" stroke="#c8c8c8" stroke-width="2.5" stroke-linecap="round"/><circle cx="480" cy="85.8" r="11" fill="url(#lg)" stroke="#8a8a8a" stroke-width="1.1"/><circle cx="480" cy="85.8" r="9.6" fill="none" stroke="#9a9a9a" stroke-width="1.5" opacity=".55"/>
<text x="480.300" y="90.200" font-size="12.500" font-weight="bold" fill="#858585" text-anchor="middle" font-family="Liberation Sans,sans-serif" letter-spacing="-.5">1:1</text>
<g fill="#4a80c4" stroke="#2f5c96" stroke-width=".7" stroke-linejoin="round"><path d="M509,73.300H519.500L516.300,76.500 520.500,80.700 516.400,84.800 512.200,80.600 509,83.800Z"/><path d="M536,73.300V83.800L532.800,80.600 528.600,84.800 524.500,80.700 528.700,76.500 525.500,73.300Z"/><path d="M536,99.600H525.500L528.700,96.400 524.500,92.200 528.600,88.100 532.800,92.300 536,89.100Z"/><path d="M509,99.600V89.100L512.200,92.300 516.400,88.100 520.500,92.200 516.300,96.400 519.500,99.600Z"/></g>
<path d="M515.3,93.6L505.5,102.8" stroke="#3a3a3a" stroke-width="4.6" stroke-linecap="round"/><path d="M513.1,95.7L505.5,102.8" stroke="#e9b730" stroke-width="2.5" stroke-linecap="round"/><circle cx="522.8" cy="86.6" r="9.8" fill="url(#lg)" stroke="#3a3a3a" stroke-width="1.1"/><circle cx="522.8" cy="86.6" r="8.4" fill="none" stroke="#9a9a9a" stroke-width="1.5" opacity=".55"/>
<rect x="550" y="76" width="17.500" height="18" fill="#f5e53f" stroke="#d8c428" stroke-width=".9"/>
<path d="M558.9,92.7L548.5,103.0" stroke="#3a3a3a" stroke-width="4.6" stroke-linecap="round"/><path d="M556.8,94.8L548.5,103.0" stroke="#e9b730" stroke-width="2.5" stroke-linecap="round"/><circle cx="567.4" cy="84.3" r="11.4" fill="url(#lg)" fill-opacity=".8" stroke="#3a3a3a" stroke-width="1.1"/><circle cx="567.4" cy="84.3" r="10.0" fill="none" stroke="#9a9a9a" stroke-width="1.5" opacity=".55"/>
<rect x="593.500" y="76" width="17.500" height="18" fill="#fdfdfd" stroke="#7a7a7a" stroke-width="1"/>
<path d="M601.9,92.7L591.5,103.0" stroke="#3a3a3a" stroke-width="4.6" stroke-linecap="round"/><path d="M599.7,94.8L591.5,103.0" stroke="#e9b730" stroke-width="2.5" stroke-linecap="round"/><circle cx="610.3" cy="84.3" r="11.4" fill="url(#lg)" fill-opacity=".8" stroke="#3a3a3a" stroke-width="1.1"/><circle cx="610.3" cy="84.3" r="10.0" fill="none" stroke="#9a9a9a" stroke-width="1.5" opacity=".55"/>
<path d="M644.0,93.0L634.5,103.0" stroke="#3a3a3a" stroke-width="4.6" stroke-linecap="round"/><path d="M641.9,95.2L634.5,103.0" stroke="#e9b730" stroke-width="2.5" stroke-linecap="round"/><circle cx="651.9" cy="84.7" r="11" fill="url(#lg)" stroke="#3a3a3a" stroke-width="1.1"/><circle cx="651.9" cy="84.7" r="9.6" fill="none" stroke="#9a9a9a" stroke-width="1.5" opacity=".55"/>
<rect x="650.300" y="90.300" width="15" height="14" rx="1.500" fill="#4a7fc1" stroke="#2c568f" stroke-width=".8"/><path d="M661.500,94L654.500,97.800 661.500,101.500" fill="none" stroke="#fff" stroke-width="2.200"/>
<path d="M687.3,93.9L678.0,103.0" stroke="#8a8a8a" stroke-width="4.6" stroke-linecap="round"/><path d="M685.2,96.0L678.0,103.0" stroke="#c8c8c8" stroke-width="2.5" stroke-linecap="round"/><circle cx="695.5" cy="85.8" r="11" fill="url(#lg)" stroke="#8a8a8a" stroke-width="1.1"/><circle cx="695.5" cy="85.8" r="9.6" fill="none" stroke="#9a9a9a" stroke-width="1.5" opacity=".55"/>
<rect x="694" y="91" width="15" height="13.500" rx="1.500" fill="#b4b4b4" stroke="#9a9a9a" stroke-width=".8"/><path d="M698,94L705,97.800 698,101.500" fill="none" stroke="#fff" stroke-width="2.200"/>
<g transform="translate(721.5,0)"><path d="M3,75.500H26.500V101H3.500C1.500,101 .5,99.500 .5,98V78C.5,76.500 1.500,75.500 3,75.500Z" fill="#e9e9e9" stroke="#8a8a8a"/><path d="M4.500,76V97.500C4.500,99.500 2,99.500 1,98.500" fill="none" stroke="#8a8a8a"/><path d="M15,74.500H21V84L18,87.500 15,84Z" fill="#4a7fc1" stroke="#2c568f" stroke-width=".9"/></g>
<g transform="translate(736.5,91.6)"><rect width="13.5" height="13.5" rx="2.5" fill="#c9a91e" stroke="#a88c12" stroke-width=".8"/><path d="M6.75,11.60L6.75,1.90M10.95,9.17L2.55,4.33M10.95,4.33L2.55,9.17" stroke="#fff" stroke-width="2.30"/><circle cx="6.75" cy="6.75" r="1.35" fill="#c9a91e"/></g>
<g transform="translate(764.5,0)"><path d="M3,75.500H26.500V101H3.500C1.500,101 .5,99.500 .5,98V78C.5,76.500 1.500,75.500 3,75.500Z" fill="#e9e9e9" stroke="#8a8a8a"/><path d="M4.500,76V97.500C4.500,99.500 2,99.500 1,98.500" fill="none" stroke="#8a8a8a"/><path d="M15,74.500H21V84L18,87.500 15,84Z" fill="#4a7fc1" stroke="#2c568f" stroke-width=".9"/></g>
<g fill="none" stroke="url(#bl)" stroke-width="5.6"><path d="M811.500,88.500A9.800,9.800 0 0 1 828.500,81.500"/><path d="M831.500,88.500A9.800,9.800 0 0 1 814.500,95.500"/></g><path d="M824,85.500L836,74.500 836.500,89.500Z" fill="#3f78c4"/><path d="M819,91.500L807,102.500 806.500,87.500Z" fill="#2f63a8"/><g fill="none" stroke="#2a5a9c" stroke-width=".6" opacity=".6"><path d="M808.700,88.500A12.600,12.600 0 0 1 830.500,79.500"/><path d="M834.300,88.500A12.600,12.600 0 0 1 812.500,97.500"/></g>
<circle cx="873" cy="85" r="11" fill="url(#bl)" stroke="#3a68a8" stroke-width=".8"/><text x="873.300" y="91.500" font-size="19" font-style="italic" font-weight="bold" fill="#fff" text-anchor="middle" font-family="Liberation Serif,serif">i</text>
<path transform="translate(878.5,86.5)" d="M0,0V14.500L3.800,11.200 6.800,17.500 9.500,16.200 6.500,10H11.500Z" fill="#fff" stroke="#222" stroke-width="1.100" stroke-linejoin="round"/>
<polygon points="928.9,85.0 931.4,85.5 931.4,88.1 928.9,88.6 928.4,90.5 930.3,92.2 929.0,94.5 926.6,93.7 925.2,95.1 926.0,97.5 923.7,98.8 922.0,96.9 920.1,97.4 919.6,99.9 917.0,99.9 916.5,97.4 914.6,96.9 912.9,98.8 910.6,97.5 911.4,95.1 910.0,93.7 907.6,94.5 906.3,92.2 908.2,90.5 907.7,88.6 905.2,88.1 905.2,85.5 907.7,85.0 908.2,83.1 906.3,81.4 907.6,79.1 910.0,79.9 911.4,78.5 910.6,76.1 912.9,74.8 914.6,76.7 916.5,76.2 917.0,73.7 919.6,73.7 920.1,76.2 922.0,76.7 923.7,74.8 926.0,76.1 925.2,78.5 926.6,79.9 929.0,79.1 930.3,81.4 928.4,83.1" fill="#e4e4e4" stroke="#a2a2a2" stroke-width=".9" stroke-dasharray="none"/><circle cx="918.300" cy="86.800" r="7.800" fill="#b9b9b9" stroke="#9a9a9a"/><path d="M915.800,82.500V91.100L923,86.800Z" fill="#fff"/>
<path transform="translate(924,89)" d="M0,0V14.500L3.800,11.200 6.800,17.500 9.500,16.200 6.500,10H11.500Z" fill="#fff" stroke="#222" stroke-width="1.100" stroke-linejoin="round"/>
<path d="M943.800,85H957L950.400,92.500Z" fill="#8c8c8c"/>
<g transform="translate(6.2,118.2)"><rect width="2.4" height="33.17" fill="url(#vd)"/></g><g transform="translate(9.2,121.8)"><rect width="2.4" height="33.17" fill="url(#vd)"/></g>
<g transform="translate(511.4,118.2)"><rect width="2.4" height="33.17" fill="url(#vd)"/></g><g transform="translate(514.4,121.8)"><rect width="2.4" height="33.17" fill="url(#vd)"/></g>
<polygon points="27.4,144.5 38.9,123.4 32.1,119.6 20.5,140.8" fill="#b9b9b9" stroke="#9a9a9a" stroke-width=".9" stroke-linejoin="round"/><polygon points="20.6,148.8 27.4,144.5 20.5,140.8" fill="#d4d4d4" stroke="#9a9a9a" stroke-width=".9" stroke-linejoin="round"/><polygon points="20.6,148.8 23.2,146.8 20.9,145.5" fill="#444"/><path d="M24.0,142.7L35.5,121.5" stroke="#9a9a9a" stroke-width=".7" opacity=".6"/><path d="M37.5,126.0L30.6,122.3" stroke="#9a9a9a" stroke-width="1"/>
<polygon points="33.9,147.4 47.4,124.3 40.6,120.3 27.2,143.5" fill="#b9b9b9" stroke="#9a9a9a" stroke-width=".9" stroke-linejoin="round"/><polygon points="27.0,151.5 33.9,147.4 27.2,143.5" fill="#d4d4d4" stroke="#9a9a9a" stroke-width=".9" stroke-linejoin="round"/><polygon points="27.0,151.5 29.6,149.6 27.4,148.3" fill="#444"/><path d="M30.5,145.5L44.0,122.3" stroke="#9a9a9a" stroke-width=".7" opacity=".6"/><path d="M45.9,126.9L39.1,122.9" stroke="#9a9a9a" stroke-width="1"/>
<path d="M41,146.300H50L45.500,151Z" fill="#8e8e8e"/>
<polygon points="73.0,146.5 86.4,124.0 79.6,120.0 66.2,142.4" fill="#f0d23c" stroke="#7a6a1a" stroke-width=".9" stroke-linejoin="round"/><polygon points="66.0,150.5 73.0,146.5 66.2,142.4" fill="#f0dcb4" stroke="#7a6a1a" stroke-width=".9" stroke-linejoin="round"/><polygon points="66.0,150.5 68.7,148.6 66.4,147.3" fill="#444"/><path d="M69.6,144.5L83.0,122.0" stroke="#7a6a1a" stroke-width=".7" opacity=".6"/><path d="M84.9,126.6L78.0,122.5" stroke="#7a6a1a" stroke-width="1"/>
<g transform="translate(104,122)"><rect x=".5" y=".5" width="26.5" height="27.5" rx="2.5" fill="#b9b9b9" stroke="#9a9a9a"/><rect x="5" y="1" width="18" height="12" fill="#d8d8d8"/><path d="M7,4H21M7,7H21M7,10H21" stroke="#b0b0b0" stroke-width="1.2"/><rect x="6" y="17.500" width="15.500" height="10" rx="1" fill="#d0d0d0"/><rect x="8.500" y="20" width="4" height="6" fill="#a0a0a0"/></g>
<polygon points="127.4,146.3 134.9,133.4 130.1,130.6 122.6,143.6" fill="#c8c8c8" stroke="#8e8e8e" stroke-width=".9" stroke-linejoin="round"/><polygon points="121.5,151.0 127.4,146.3 122.6,143.6" fill="#dcdcdc" stroke="#8e8e8e" stroke-width=".9" stroke-linejoin="round"/><polygon points="121.5,151.0 124.1,149.1 121.9,147.8" fill="#444"/><path d="M125.0,144.9L132.5,132.0" stroke="#8e8e8e" stroke-width=".7" opacity=".6"/><path d="M133.4,136.0L128.6,133.2" stroke="#8e8e8e" stroke-width="1"/>
<path transform="translate(148,121.5) scale(1.0,0.9473684210526315)" d="M7,.8C12,.8 14,3.500 18,3 22,2.400 24.500,.5 26.500,3 28,6 27.500,11 25.500,12.500 22.500,14.500 19,11.500 15,13 11,14.500 9.500,18.500 5.500,18 1.500,17 .5,12 .8,8 1,3.500 3,.8 7,.8Z" fill="#bdbdbd" stroke="#a4a4a4" stroke-width="1"/>
<g transform="translate(164,138.5)"><rect width="13.5" height="13.5" rx="2.5" fill="#bdbdbd" stroke="#a8a8a8" stroke-width=".8"/><path d="M6.75,11.60L6.75,1.90M10.95,9.17L2.55,4.33M10.95,4.33L2.55,9.17" stroke="#fff" stroke-width="2.30"/><circle cx="6.75" cy="6.75" r="1.35" fill="#bdbdbd"/></g>
<path d="M194,146C194,136 198,131 212.500,125.500" fill="none" stroke="#b0b0b0" stroke-width="1.400"/><g fill="#d0d0d0" stroke="#a8a8a8"><rect x="191.500" y="144" width="4.500" height="4.500"/><rect x="196.500" y="129" width="4.500" height="4.500"/><rect x="211" y="123" width="4.500" height="4.500"/></g>
<g transform="translate(207.5,138.5)"><rect width="13.5" height="13.5" rx="2.5" fill="#bdbdbd" stroke="#a8a8a8" stroke-width=".8"/><path d="M6.75,11.60L6.75,1.90M10.95,9.17L2.55,4.33M10.95,4.33L2.55,9.17" stroke="#fff" stroke-width="2.30"/><circle cx="6.75" cy="6.75" r="1.35" fill="#bdbdbd"/></g>
<path d="M228,132.500H241.500L234.800,139.500Z" fill="#9a9a9a"/>
<path transform="translate(252,121.5) scale(1.0,0.9473684210526315)" d="M7,.8C12,.8 14,3.500 18,3 22,2.400 24.500,.5 26.500,3 28,6 27.500,11 25.500,12.500 22.500,14.500 19,11.500 15,13 11,14.500 9.500,18.500 5.500,18 1.500,17 .5,12 .8,8 1,3.500 3,.8 7,.8Z" fill="#bdbdbd" stroke="#a4a4a4" stroke-width="1"/>
<rect x="267.500" y="138.500" width="13.500" height="13.500" rx="2.500" fill="#b4b4b4" stroke="#a0a0a0" stroke-width=".8"/><path d="M270,145.300H276M274,141.800L278.500,145.300 274,148.800" fill="none" stroke="#fff" stroke-width="2.200"/>
<rect x="300.500" y="124.500" width="7" height="7" fill="#e8e8e8" stroke="#9a9a9a"/><path d="M300.500,124.500L307.500,131.500M307.500,124.500L300.500,131.500M307.500,127.500H321M304,131.500L297,148" stroke="#9a9a9a" stroke-width="1" fill="none"/><path d="M309,147.500L320.500,134.500" stroke="#b0b0b0" stroke-width="3.200" stroke-linecap="round"/><path d="M310,135.500L321.500,148" stroke="#a8a8a8" stroke-width="3.200" stroke-linecap="round"/><path d="M316.500,131L323.500,137.500" stroke="#9a9a9a" stroke-width="4" />
<g fill="none" stroke="#8e8e8e"><path d="M342,127.500H362.500" stroke-width="2.600" stroke-linecap="round"/><path d="M348,126.500V123.500H356.500V126.500" stroke-width="1.800"/><path d="M344.500,130.500L345.800,148.500H358.700L360,130.500Z" fill="#e0e0e0" stroke-width="2.200" stroke-linejoin="round"/><path d="M349.300,133V146M352.250,133V146M355.200,133V146" stroke-width="1.700"/></g>
<g fill="none" stroke="#9e9e9e" stroke-linecap="round"><path d="M381.500,134L401,139.500" stroke-width="2.200"/><path d="M384,141.500L402,131.500" stroke-width="2.200"/><ellipse cx="405" cy="130.500" rx="4" ry="3" stroke-width="1.600" transform="rotate(-25 405 130.500)"/><ellipse cx="404.500" cy="141.500" rx="4" ry="3" stroke-width="1.600" transform="rotate(25 404.500 141.500)"/></g>
<path d="M433.5,122.5H443.5L448.5,127.5V142.5H433.5Z" fill="#ececec" stroke="#a2a2a2" stroke-width="1.100"/><path d="M443.5,122.5V127.5H448.5" fill="none" stroke="#a2a2a2" stroke-width="1.100"/>
<path d="M427.5,128.5H438.0L443.0,133.5V149.0H427.5Z" fill="#ececec" stroke="#a2a2a2" stroke-width="1.100"/><path d="M438.0,128.5V133.5H443.0" fill="none" stroke="#a2a2a2" stroke-width="1.100"/><path d="M430.5,137.5H440.0" stroke="#b4b4b4" stroke-width="1.100"/><path d="M430.5,140.7H440.0" stroke="#b4b4b4" stroke-width="1.100"/>
<rect x="470.500" y="124" width="21.500" height="25" rx="1.500" fill="#dcdcdc" stroke="#a2a2a2" stroke-width="1.100"/><rect x="476" y="121.500" width="10.500" height="5" rx="1" fill="#c0c0c0" stroke="#a2a2a2"/>
<path d="M474,128H485L489,132V146.5H474Z" fill="#ececec" stroke="#a2a2a2" stroke-width="1.100"/><path d="M485,128V132H489" fill="none" stroke="#a2a2a2" stroke-width="1.100"/><path d="M477,136.0H486" stroke="#b4b4b4" stroke-width="1.100"/><path d="M477,139.2H486" stroke="#b4b4b4" stroke-width="1.100"/>
<rect x="542.300" y="125.500" width="5.700" height="21" fill="#f5dc50" stroke="#c4a420" stroke-width=".8"/><path d="M545.500,128H548M546.500,130.500H548M545.500,133H548M546.500,135.500H548M545.500,138H548M546.500,140.500H548" stroke="#8a7410" stroke-width=".7"/><path d="M527,124.400V147.300H549.800Z" fill="#f7a666" stroke="#dd7c30" stroke-width="1.300" stroke-linejoin="round"/><path d="M532,135.800V142.700H539.500Z" fill="#f0f0f0" stroke="#dd7c30" stroke-width="1"/>
<g transform="rotate(-40 581.500 136)"><path d="M573.500,130V138C573.500,148.500 589.500,148.500 589.500,138V130H584.500V138C584.500,142 578.500,142 578.500,138V130Z" fill="#b2b2b2" stroke="#9a9a9a" stroke-width=".9"/><path d="M573.500,130H578.500V133H573.500ZM584.500,130H589.500V133H584.500Z" fill="#e8e8e8" stroke="#9a9a9a" stroke-width=".8"/></g><path d="M574.500,127L577,129.500 574.500,130 577,132.500" fill="none" stroke="#9a9a9a" stroke-width=".9"/>
<path d="M612.500,133L623.500,124.500V130C633,130 637,135 635.500,141 634.500,145 631,147 626.500,147L626.500,142.500C630,142.500 631,140 630.500,138.500 630,136.500 628,136 623.500,136V141.500Z" fill="#b8b8b8" stroke="#a6a6a6" stroke-width=".9" stroke-linejoin="round"/>
<path d="M678.500,133L667.500,124.500V130C658,130 654,135 655.500,141 656.500,145 660,147 664.500,147L664.500,142.500C661,142.500 660,140 660.500,138.500 661,136.500 663,136 667.500,136V141.500Z" fill="#b8b8b8" stroke="#a6a6a6" stroke-width=".9" stroke-linejoin="round"/>
<path transform="translate(699,124.5) scale(0.8214285714285714,0.7105263157894737)" d="M7,.8C12,.8 14,3.500 18,3 22,2.400 24.500,.5 26.500,3 28,6 27.500,11 25.500,12.500 22.500,14.500 19,11.500 15,13 11,14.500 9.500,18.500 5.500,18 1.500,17 .5,12 .8,8 1,3.500 3,.8 7,.8Z" fill="#bdbdbd" stroke="#a4a4a4" stroke-width="1"/>
<rect x="711" y="136.500" width="11.500" height="11.500" rx="1.500" fill="#a4a4a4"/><path d="M719.500,142.500A3,3 0 1 1 716.500,139.500" fill="none" stroke="#fff" stroke-width="1.400"/><path d="M715.500,137.500L718.500,139.500 715.500,141.500Z" fill="#fff"/>
<circle cx="752" cy="134" r="10" fill="#d2d2d2" stroke="#a6a6a6" stroke-width="1.100"/><path d="M748.500,136.500L756,131.500 763.500,136.500V144L756,148.500 748.500,144Z" fill="#c4c4c4" stroke="#9e9e9e" stroke-width="1.100"/><path d="M756.500,134.500V144M753.500,141L756.500,144.500 759.500,141" fill="none" stroke="#8e8e8e" stroke-width="1.100"/>
<path transform="translate(786,124.5) scale(0.7857142857142857,0.6052631578947368)" d="M7,.8C12,.8 14,3.500 18,3 22,2.400 24.500,.5 26.500,3 28,6 27.500,11 25.500,12.500 22.500,14.500 19,11.500 15,13 11,14.500 9.500,18.500 5.500,18 1.500,17 .5,12 .8,8 1,3.500 3,.8 7,.8Z" fill="#bdbdbd" stroke="#a4a4a4" stroke-width="1"/>
<ellipse cx="793" cy="129.800" rx="4.200" ry="2.600" fill="#f0f0f0" stroke="#a4a4a4" stroke-width=".9" transform="rotate(-10 793 129.800)"/>
<g transform="translate(797,137)"><rect width="10.5" height="10.5" rx="2.5" fill="#bdbdbd" stroke="#a8a8a8" stroke-width=".8"/><path d="M5.25,8.60L5.25,1.90M8.15,6.92L2.35,3.58M8.15,3.58L2.35,6.92" stroke="#fff" stroke-width="1.79"/><circle cx="5.25" cy="5.25" r="1.05" fill="#bdbdbd"/></g>
<path transform="translate(828.5,124.5) scale(0.7857142857142857,0.5789473684210527)" d="M7,.8C12,.8 14,3.500 18,3 22,2.400 24.500,.5 26.500,3 28,6 27.500,11 25.500,12.500 22.500,14.500 19,11.500 15,13 11,14.500 9.500,18.500 5.500,18 1.500,17 .5,12 .8,8 1,3.500 3,.8 7,.8Z" fill="#bdbdbd" stroke="#a4a4a4" stroke-width="1"/>
<ellipse cx="834" cy="141.500" rx="4.300" ry="6" fill="#c4c4c4" stroke="#a4a4a4" transform="rotate(30 834 141.500)"/>
<g transform="translate(839.5,137)"><rect width="10.5" height="10.5" rx="2.5" fill="#bdbdbd" stroke="#a8a8a8" stroke-width=".8"/><path d="M5.25,8.60L5.25,1.90M8.15,6.92L2.35,3.58M8.15,3.58L2.35,6.92" stroke="#fff" stroke-width="1.79"/><circle cx="5.25" cy="5.25" r="1.05" fill="#bdbdbd"/></g>
<path transform="translate(866.5,120.5) scale(1.0714285714285714,1.105263157894737)" d="M7,.8C12,.8 14,3.500 18,3 22,2.400 24.500,.5 26.500,3 28,6 27.500,11 25.500,12.500 22.500,14.500 19,11.500 15,13 11,14.500 9.500,18.500 5.500,18 1.500,17 .5,12 .8,8 1,3.500 3,.8 7,.8Z" fill="#bdbdbd" stroke="#a4a4a4" stroke-width="1"/>
<ellipse cx="877" cy="129" rx="7" ry="5.300" fill="#aaaaaa" stroke="#9a9a9a" transform="rotate(-12 877 129)"/>
<g transform="translate(883.5,138)"><rect width="14" height="14" rx="2.5" fill="#bdbdbd" stroke="#a8a8a8" stroke-width=".8"/><path d="M7.00,12.10L7.00,1.90M11.42,9.55L2.58,4.45M11.42,4.45L2.58,9.55" stroke="#fff" stroke-width="2.38"/><circle cx="7.0" cy="7.0" r="1.40" fill="#bdbdbd"/></g>
<path transform="translate(914.5,124.5) scale(0.7857142857142857,0.6052631578947368)" d="M7,.8C12,.8 14,3.500 18,3 22,2.400 24.500,.5 26.500,3 28,6 27.500,11 25.500,12.500 22.500,14.500 19,11.500 15,13 11,14.500 9.500,18.500 5.500,18 1.500,17 .5,12 .8,8 1,3.500 3,.8 7,.8Z" fill="#bdbdbd" stroke="#a4a4a4" stroke-width="1"/>
<ellipse cx="921.500" cy="129.800" rx="4.200" ry="2.600" fill="#f0f0f0" stroke="#a4a4a4" stroke-width=".9" transform="rotate(-10 921.500 129.800)"/>
<rect x="927" y="137.500" width="10.500" height="10.500" rx="1" fill="#b4b4b4"/><path d="M929,139.500L935.500,146M935.500,139.500L929,146" stroke="#fff" stroke-width="1.600"/>
<path transform="translate(957,124.5) scale(0.7857142857142857,0.5789473684210527)" d="M7,.8C12,.8 14,3.500 18,3 22,2.400 24.500,.5 26.500,3 28,6 27.500,11 25.500,12.500 22.500,14.500 19,11.500 15,13 11,14.500 9.500,18.500 5.500,18 1.500,17 .5,12 .8,8 1,3.500 3,.8 7,.8Z" fill="#bdbdbd" stroke="#a4a4a4" stroke-width="1"/>
<ellipse cx="962.500" cy="141.500" rx="4.300" ry="6" fill="#c4c4c4" stroke="#a4a4a4" transform="rotate(30 962.500 141.500)"/>
<g transform="translate(3,167.5)"><rect width="59.0" height="2.4" fill="url(#hd)"/></g><g transform="translate(4.6,170.5)"><rect width="59.0" height="2.4" fill="url(#hd)"/></g>
<g transform="translate(3,768.5)"><rect width="59.0" height="2.4" fill="url(#hd)"/></g><g transform="translate(4.6,771.5)"><rect width="59.0" height="2.4" fill="url(#hd)"/></g>
<g transform="translate(17.5,176.5) scale(1.0)" fill="#f0f0f0" stroke="#2f4f78" stroke-width="1.500"><path d="M3.500,3L11,21.500 19,3.500H27" fill="none"/><circle cx="3" cy="3" r="2.600"/><circle cx="11" cy="21.500" r="2.600"/><circle cx="19.500" cy="3.500" r="2.600"/><circle cx="28" cy="3.500" r="2.600"/></g>
<g transform="translate(36,195.3)"><rect width="12.5" height="12.5" rx="2.5" fill="#5b9b52" stroke="#3f7a3a" stroke-width=".8"/><path d="M6.25,2.6V9.9M2.6,6.25H9.9" stroke="#fff" stroke-width="2.6"/></g>
<g><rect x="17.2" y="217.8" width="8.600" height="8.500" fill="#2c4a78"/><rect x="25.8" y="217.8" width="8.600" height="8.500" fill="#7a9fd0"/><rect x="34.4" y="217.8" width="8.600" height="8.500" fill="#2c4a78"/><rect x="17.2" y="226.3" width="8.600" height="8.500" fill="#7a9fd0"/><rect x="25.8" y="226.3" width="8.600" height="8.500" fill="#2c4a78"/><rect x="34.4" y="226.3" width="8.600" height="8.500" fill="#7a9fd0"/><rect x="17.2" y="234.8" width="8.600" height="8.500" fill="#2c4a78"/><rect x="25.8" y="234.8" width="8.600" height="8.500" fill="#7a9fd0"/><rect x="34.4" y="234.8" width="8.600" height="8.500" fill="#b8cce8"/></g>
<g transform="translate(37,237.5)"><rect width="12.5" height="12.5" rx="2.5" fill="#5b9b52" stroke="#3f7a3a" stroke-width=".8"/><path d="M6.25,2.6V9.9M2.6,6.25H9.9" stroke="#fff" stroke-width="2.6"/></g>
<path d="M17.500,290.500C19,281 24,271 33,265 38,261.500 43.500,260.500 47.500,260 46.500,266 44,271.500 39,275.500 34,279 27,281 22.500,282 20.500,285 19.500,288 18.800,291Z" fill="#a9c3e6" stroke="#2f4f78" stroke-width="1.100" stroke-linejoin="round"/><path d="M18.500,290C22,280 30,270 45,261.500M26,277L36,274M29,272.500L40,269.500M33,268.500L43,265.500" fill="none" stroke="#2f4f78" stroke-width=".8"/>
<g transform="translate(37,280)"><rect width="12.5" height="12.5" rx="2.5" fill="#5b9b52" stroke="#3f7a3a" stroke-width=".8"/><path d="M6.25,2.6V9.9M2.6,6.25H9.9" stroke="#fff" stroke-width="2.6"/></g>
<path d="M10,308C8,304 10.500,301.500 14,302.500 17,300.500 24,300.500 28,302.500 32.500,302 34,306 32,310 33,315 31,319 28.500,320V325.500C27.500,327 24.500,327 24,325.500V321C22,321.500 20,321 19,320 19.500,323 18,326 15.500,325.500 13,325 13.500,321 14,318.500 11,317 9.500,312 10,308Z" fill="#5e86b8" stroke="#2c4a78" stroke-width="1.300" stroke-linejoin="round"/><path d="M20,304C18,309 19,315 22,318M26,306.500C27,305.500 29,306 29,307.500" fill="none" stroke="#2c4a78" stroke-width="1"/>
<g transform="translate(27.8,322.3)"><rect width="12.5" height="12.5" rx="2.5" fill="#5b9b52" stroke="#3f7a3a" stroke-width=".8"/><path d="M6.25,2.6V9.9M2.6,6.25H9.9" stroke="#fff" stroke-width="2.6"/></g>
<path d="M46.500,314H60L53.250,321.500Z" fill="#000"/>
<circle cx="24.5" cy="359.5" r="15" fill="#dfe8f4" stroke="#5a86c0" stroke-width="1.300"/><ellipse cx="24.5" cy="359.5" rx="6.8" ry="15" fill="none" stroke="#5a86c0" stroke-width=".9"/><path d="M9.5,359.5H39.5M11.4,352.0H37.5M11.4,367.0H37.5" stroke="#5a86c0" stroke-width=".9"/>
<path d="M14,352C17,349 21,350 22,353 20,356 16,357 14,355ZM25,351C29,349 34,350 36,354 35,358 33,362 30,363 27,361 28,357 25,356Z" fill="#b4c8e4" opacity=".9"/>
<circle cx="16" cy="367.5" r="7.5" fill="#2a7a3a" stroke="#1a3a5a" stroke-width="1"/><ellipse cx="16" cy="367.5" rx="3.4" ry="7.5" fill="none" stroke="#9ad0ff" stroke-width=".7"/><path d="M8.5,367.5H23.5M9.5,363.8H22.5M9.5,371.2H22.5" stroke="#9ad0ff" stroke-width=".7"/><circle cx="14" cy="365.5" r="2.500" fill="#4c5ad0" opacity=".7"/>
<g transform="translate(28,362.5)"><rect width="12.5" height="12.5" rx="2.5" fill="#5b9b52" stroke="#3f7a3a" stroke-width=".8"/><path d="M6.25,2.6V9.9M2.6,6.25H9.9" stroke="#fff" stroke-width="2.6"/></g>
<path d="M46.500,356H60L53.250,363.500Z" fill="#000"/>
<ellipse cx="33" cy="400" rx="15.500" ry="13.500" fill="#eef2f8" stroke="#22324a" stroke-width="1.800"/><path d="M18.500,395.500H47.500V404.500H18.500Z" fill="#3d68a4"/><path d="M21,390.500H45V395.500H21ZM21,404.500H45V409.500H21Z" fill="#6d95cc"/><ellipse cx="33" cy="400" rx="6.500" ry="13.500" fill="none" stroke="#fff" stroke-width="1.600"/><ellipse cx="33" cy="400" rx="15.500" ry="13.500" fill="none" stroke="#22324a" stroke-width="1.800"/>
<g transform="translate(37,405)"><rect width="12.5" height="12.5" rx="2.5" fill="#5b9b52" stroke="#3f7a3a" stroke-width=".8"/><path d="M6.25,2.6V9.9M2.6,6.25H9.9" stroke="#fff" stroke-width="2.6"/></g>
<circle cx="24.5" cy="443.5" r="15" fill="#f4f7fb" stroke="#6c96cc" stroke-width="1.300"/><ellipse cx="24.5" cy="443.5" rx="6.8" ry="15" fill="none" stroke="#6c96cc" stroke-width=".9"/><path d="M9.5,443.5H39.5M11.4,436.0H37.5M11.4,451.0H37.5" stroke="#6c96cc" stroke-width=".9"/>
<g transform="translate(13,431.5) scale(0.85)" fill="#f0f0f0" stroke="#22324a" stroke-width="1.500"><path d="M3.500,3L11,21.500 19,3.500H27" fill="none"/><circle cx="3" cy="3" r="2.600"/><circle cx="11" cy="21.500" r="2.600"/><circle cx="19.500" cy="3.500" r="2.600"/><circle cx="28" cy="3.500" r="2.600"/></g>
<circle cx="16" cy="451.5" r="7.5" fill="#2a7a3a" stroke="#1a3a5a" stroke-width="1"/><ellipse cx="16" cy="451.5" rx="3.4" ry="7.5" fill="none" stroke="#9ad0ff" stroke-width=".7"/><path d="M8.5,451.5H23.5M9.5,447.8H22.5M9.5,455.2H22.5" stroke="#9ad0ff" stroke-width=".7"/><circle cx="14" cy="449.5" r="2.500" fill="#4c5ad0" opacity=".7"/>
<g transform="translate(28,446.5)"><rect width="12.5" height="12.5" rx="2.5" fill="#5b9b52" stroke="#3f7a3a" stroke-width=".8"/><path d="M6.25,2.6V9.9M2.6,6.25H9.9" stroke="#fff" stroke-width="2.6"/></g>
<path d="M46.500,440H60L53.250,447.500Z" fill="#000"/>
<path d="M29.500,473.500C34,473 37.500,476 37.500,481 37.500,488 31,493.500 24.500,495.500L23.500,493.500C28,491.500 31.500,488 31.500,484.500 31.500,483 30.500,482.500 29,482.500 26,482.500 24,480.500 24,478 24,475.500 26.500,473.500 29.500,473.500Z" fill="#4d78b4" stroke="#345a92" stroke-width=".6"/>
<g transform="translate(37,489.5)"><rect width="12.5" height="12.5" rx="2.5" fill="#5b9b52" stroke="#3f7a3a" stroke-width=".8"/><path d="M6.25,2.6V9.9M2.6,6.25H9.9" stroke="#fff" stroke-width="2.6"/></g>
<rect x="19" y="513.500" width="28" height="28.500" rx="3.500" fill="url(#vb)" stroke="#4a6fa5" stroke-width="1.200"/>
<g transform="translate(21,517) scale(0.82)" fill="#fff" stroke="#2f4f78" stroke-width="1.500"><path d="M3.500,3L11,21.500 19,3.500H27" fill="none"/><circle cx="3" cy="3" r="2.600"/><circle cx="11" cy="21.500" r="2.600"/><circle cx="19.500" cy="3.500" r="2.600"/><circle cx="28" cy="3.500" r="2.600"/></g>
<g transform="translate(36.5,530.5)"><rect width="12.5" height="12.5" rx="2.5" fill="#5b9b52" stroke="#3f7a3a" stroke-width=".8"/><path d="M6.25,2.6V9.9M2.6,6.25H9.9" stroke="#fff" stroke-width="2.6"/></g>
<g transform="translate(8.5,554.5) scale(1.0)" fill="#f0f0f0" stroke="#2f4f78" stroke-width="1.500"><path d="M3.500,3L11,21.500 19,3.500H27" fill="none"/><circle cx="3" cy="3" r="2.600"/><circle cx="11" cy="21.500" r="2.600"/><circle cx="19.500" cy="3.500" r="2.600"/><circle cx="28" cy="3.500" r="2.600"/></g>
<g transform="translate(27.8,573.5)"><rect width="12.5" height="12.5" rx="2.5" fill="#c9a91e" stroke="#a88c12" stroke-width=".8"/><path d="M6.25,10.60L6.25,1.90M10.02,8.42L2.48,4.08M10.02,4.08L2.48,8.42" stroke="#fff" stroke-width="2.12"/><circle cx="6.25" cy="6.25" r="1.25" fill="#c9a91e"/></g>
<path d="M46.500,565.500H60L53.250,573Z" fill="#000"/>
<g transform="translate(19.5,598)"><rect x="2" y="4" width="26" height="11" fill="#a9c3e6" stroke="#2f4f78" stroke-width="1.200"/><path d="M6,4V15M24,4V15" stroke="#2f4f78" stroke-width="1"/><rect x="10" y="1" width="7" height="17" fill="#dbe6f4" stroke="#2f4f78" stroke-width="1.200"/><path d="M13.500,18V21" stroke="#2f4f78" stroke-width="1.500"/><path d="M1,16C1,23 6,28 13,28M4.500,16C4.500,21 8,24.500 13,24.500M8,16C8,19 10,21 13,21" fill="none" stroke="#2f4f78" stroke-width="1.200"/></g>
<g transform="translate(37,615.5)"><rect width="12.5" height="12.5" rx="2.5" fill="#c9a91e" stroke="#a88c12" stroke-width=".8"/><path d="M6.25,10.60L6.25,1.90M10.02,8.42L2.48,4.08M10.02,4.08L2.48,8.42" stroke="#fff" stroke-width="2.12"/><circle cx="6.25" cy="6.25" r="1.25" fill="#c9a91e"/></g>
<rect x="19" y="641.500" width="26.500" height="19" rx="7" fill="#7a9fd0" stroke="#2c4a78" stroke-width="1.400"/><path d="M28,642H37V651H28ZM19.500,651H28V660H24C21,660 19.500,657 19.500,654ZM37,651H45V654C45,657 43,660 41,660H37Z" fill="#2c4a78"/>
<g transform="translate(37,657.5)"><rect width="12.5" height="12.5" rx="2.5" fill="#5b9b52" stroke="#3f7a3a" stroke-width=".8"/><path d="M6.25,2.6V9.9M2.6,6.25H9.9" stroke="#fff" stroke-width="2.6"/></g>
<path d="M22,681H37.500L44.500,688V710H22Z" fill="#63b54a"/><path d="M37.500,681V688H44.500Z" fill="#9ad684"/>
<g transform="translate(37,698.5)"><rect width="11" height="11" rx="2.5" fill="#4f9a40" stroke="#4f9a40" stroke-width=".8"/><path d="M5.5,2.6V8.4M2.6,5.5H8.4" stroke="#fff" stroke-width="2.6"/></g>
<ellipse cx="24.300" cy="736.500" rx="16" ry="14.500" fill="url(#gg)" stroke="#4a7ac0" stroke-width="1.300"/><ellipse cx="24.300" cy="736.500" rx="7" ry="14.500" fill="none" stroke="#e8eef8" stroke-width="1.100"/><path d="M8.500,736.500H40M10.500,729.500H38M10.500,743.500H38" stroke="#e8eef8" stroke-width="1.100"/>
<g transform="translate(28.5,743)"><rect width="10.5" height="10.5" rx="2.5" fill="#5b8b52" stroke="#3f6a3a" stroke-width=".8"/><path d="M5.25,2.6V7.9M2.6,5.25H7.9" stroke="#fff" stroke-width="2.6"/></g>
<path d="M32,748.500H41L36.500,753.500Z" fill="#000"/>
<path d="M35.500,783V809.500M22,796.500H44.500" stroke="#333" stroke-width="1"/><circle cx="35.500" cy="796.500" r="4.200" fill="none" stroke="#d02020" stroke-width="1.100" stroke-dasharray="3 1.600"/>
<circle cx="31.500" cy="826.500" r="2" fill="#fff" stroke="#444" stroke-width="1"/><path d="M31,828.500L27.500,841M32,828.500L35.500,838M26.500,832H33" stroke="#444" stroke-width="1" fill="none"/><path d="M29.500,832C26,836 27,841.500 31,843" fill="none" stroke="#444" stroke-width="1"/><rect x="34.500" y="837.500" width="11" height="10.500" rx="2" fill="#2f5878" stroke="#1f3f58" stroke-width=".8"/><path d="M43.500,842.750H38M40,840L37.500,842.750 40,845.500M43,840V845.500" stroke="#fff" stroke-width="1.100" fill="none"/>
<g transform="translate(19.5,864)"><rect x="2" y="4" width="26" height="11" fill="#a9c3e6" stroke="#2f4f78" stroke-width="1.200"/><path d="M6,4V15M24,4V15" stroke="#2f4f78" stroke-width="1"/><rect x="10" y="1" width="7" height="17" fill="#dbe6f4" stroke="#2f4f78" stroke-width="1.200"/><path d="M13.500,18V21" stroke="#2f4f78" stroke-width="1.500"/><path d="M1,16C1,23 6,28 13,28M4.500,16C4.500,21 8,24.500 13,24.500M8,16C8,19 10,21 13,21" fill="none" stroke="#2f4f78" stroke-width="1.200"/></g>
<path d="M22.500,910L27.500,928.500" stroke="#4a78c0" stroke-width="1"/><circle cx="22.500" cy="910" r="1.300" fill="#fff" stroke="#4a78c0"/><circle cx="27.500" cy="928.500" r="1.300" fill="#fff" stroke="#4a78c0"/><circle cx="37.500" cy="929.500" r="1.300" fill="#fff" stroke="#4a78c0"/><circle cx="40.500" cy="925" r="1.300" fill="#fff" stroke="#4a78c0"/><path d="M31,909.500C35,907.500 42,907.500 44.500,910 45,915 44,920 40,922 36,923 33.500,920 32.500,916 31.500,913 30,911 31,909.500Z" fill="none" stroke="#333" stroke-width="1"/><path d="M31.500,928L37,912.500 43.500,911" fill="none" stroke="#d02020" stroke-width="1.100"/><circle cx="31.500" cy="928" r="1.300" fill="#fff" stroke="#d02020"/><circle cx="37" cy="912.500" r="1.300" fill="#fff" stroke="#d02020"/><circle cx="43.500" cy="911" r="1.300" fill="#fff" stroke="#d02020"/><circle cx="40.500" cy="918" r="1.300" fill="#fff" stroke="#d02020"/>
<path d="M21,950L33,956.500 45.500,950M21,974L28,962" stroke="#2f4f78" stroke-width="1.300" fill="none"/><path d="M27,955C32,950.500 40,950 46.500,951 47.500,956 45,961 40,962.500 37,963.500 35.500,967 31,969.500 26.500,968.500 22.500,962 27,955Z" fill="#5c86c0" stroke="#2f4f78" stroke-width="1.200"/><g fill="#f7e23c" stroke="#8a7a10" stroke-width="1"><circle cx="20.800" cy="950" r="3.200"/><circle cx="33" cy="956.500" r="2.800"/><circle cx="45.800" cy="950.300" r="3.200"/><circle cx="20.800" cy="974" r="3.200"/></g><path d="M33.500,967.500L39,975.500 48.500,962.500 38.500,970.500Z" fill="#f7e23c" stroke="#3a3a1a" stroke-width="1" stroke-linejoin="round"/>
<path d="M21.800,1027.500L24.500,1030 27.200,1027.500M21.800,1031.500L24.500,1034 27.200,1031.500" fill="none" stroke="#000" stroke-width="1.500"/>
<g transform="translate(417.2,453)"><rect width="2.5" height="287" fill="url(#vd5)"/></g>
<g transform="translate(70.5,170.5)"><rect width="105.5" height="2.4" fill="url(#hd)"/></g><g transform="translate(72.1,173.5)"><rect width="105.5" height="2.4" fill="url(#hd)"/></g>
<g transform="translate(276,170.5)"><rect width="102.5" height="2.4" fill="url(#hd)"/></g><g transform="translate(277.6,173.5)"><rect width="102.5" height="2.4" fill="url(#hd)"/></g>
<g transform="translate(183,669.5)"><rect width="111.0" height="2.4" fill="url(#hd)"/></g><g transform="translate(184.6,672.5)"><rect width="111.0" height="2.4" fill="url(#hd)"/></g>
<g transform="translate(70.5,683.5)"><rect width="87.5" height="2.4" fill="url(#hd)"/></g><g transform="translate(72.1,686.5)"><rect width="87.5" height="2.4" fill="url(#hd)"/></g>
<g transform="translate(287.5,683.5)"><rect width="89.0" height="2.4" fill="url(#hd)"/></g><g transform="translate(289.1,686.5)"><rect width="89.0" height="2.4" fill="url(#hd)"/></g>
<rect x="381.500" y="164.7" width="15.500" height="14.500" rx="2.500" fill="#fbfbfb" stroke="#5e5e5e" stroke-width=".9"/><rect x="398.500" y="164.7" width="15" height="14.500" rx="2.500" fill="#fbfbfb" stroke="#5e5e5e" stroke-width=".9"/><path d="M402.500,168.2L409.500,175.2M409.500,168.2L402.500,175.2" stroke="#000" stroke-width="1.500"/><path d="M387.500,168.2H393V172.7H391.500M387.500,168.2V169.7" fill="none" stroke="#000" stroke-width="1.100"/><rect x="385.500" y="170.2" width="5.500" height="5" fill="#fff" stroke="#000" stroke-width="1.100"/><path d="M385.500,170.7H391" stroke="#000" stroke-width="1.600"/>
<rect x="381.500" y="678.9" width="15.500" height="14.500" rx="2.500" fill="#fbfbfb" stroke="#5e5e5e" stroke-width=".9"/><rect x="398.500" y="678.9" width="15" height="14.500" rx="2.500" fill="#fbfbfb" stroke="#5e5e5e" stroke-width=".9"/><path d="M402.500,682.4L409.500,689.4M409.500,682.4L402.500,689.4" stroke="#000" stroke-width="1.500"/><path d="M387.500,682.4H393V686.9H391.500M387.500,682.4V683.9" fill="none" stroke="#000" stroke-width="1.100"/><rect x="385.500" y="684.4" width="5.500" height="5" fill="#fff" stroke="#000" stroke-width="1.100"/><path d="M385.500,684.9H391" stroke="#000" stroke-width="1.600"/>
<g fill="#e4e4e4" stroke="#6a6a6a" stroke-width="1.100"><path d="M84.500,194.500H90.500V211H81.500V197.500Z"/><path d="M79.500,199.500H88V214H76.500V202.500Z" fill="#efefef"/><path d="M84.500,194.500V197.500H81.500M79.500,199.500V202.500H76.500" fill="none"/></g>
<g transform="translate(86.5,206)"><rect width="10.5" height="10.5" rx="2.5" fill="#5b9b52" stroke="#3f7a3a" stroke-width=".8"/><path d="M5.25,2.6V7.9M2.6,5.25H7.9" stroke="#fff" stroke-width="2.6"/></g>
<path d="M109.500,206.500C114,199.500 125,197.500 134,205.500 128,213.500 116,214 109.500,206.500Z" fill="#f6f6f6" stroke="#555" stroke-width="1.100"/><path d="M110.500,203C115,197.500 126,196 133.500,202.500" fill="none" stroke="#777" stroke-width=".9"/><circle cx="121.500" cy="205.500" r="4.800" fill="#4d7fc0" stroke="#2c4a78" stroke-width=".8"/><circle cx="121.500" cy="205.500" r="2" fill="#111"/><path d="M126,212H134.500L130.250,216.500Z" fill="#000"/>
<path d="M146.500,198H166V199.500L158.500,207.500V216.500L154,214.500V207.500L146.500,199.500Z" fill="#4d7fc0" stroke="#2c568f" stroke-width="1" stroke-linejoin="round"/><rect x="146" y="194.500" width="20.500" height="4" rx="1.500" fill="#f5d73c" stroke="#c4a81c" stroke-width=".8"/>
<text x="181" y="209" font-size="27" fill="#9a9a9a" font-family="Liberation Serif,serif">ε</text><path d="M194.500,216.500V210.500C194.500,208.500 195.500,207.500 197.500,207.500H201.500C203.500,207.500 204.500,208.500 204.500,210.500V216.500H202V211.500H197V216.500Z" fill="#c4c4c4" stroke="#b0b0b0" stroke-width=".6"/><path d="M210,201.500H223.500L216.750,208.500Z" fill="#9a9a9a"/>
<g transform="translate(233.2,0)"><path d="M1,196.700H20.500M2.500,196.700V214M2.500,203.300H6.500M2.500,212.300H6.500" stroke="#8e8e8e" stroke-width="1.100" fill="none"/><rect x="6.300" y="201" width="4.600" height="4.600" fill="#f6a532" stroke="#d48a1c" stroke-width=".6"/><rect x="6.300" y="210" width="4.600" height="4.600" fill="#f6a532" stroke="#d48a1c" stroke-width=".6"/></g>
<path d="M247.500,195H252.500V205.500H257L250,214.500 243,205.500H247.500Z" fill="#4d7fc0" stroke="#2c568f" stroke-width=".9" stroke-linejoin="round"/>
<g transform="translate(268.2,0)"><path d="M1,196.700H20.500M2.500,196.700V214M2.500,203.300H6.500M2.500,212.300H6.500" stroke="#8e8e8e" stroke-width="1.100" fill="none"/><rect x="6.300" y="201" width="4.600" height="4.600" fill="#f6a532" stroke="#d48a1c" stroke-width=".6"/><rect x="6.300" y="210" width="4.600" height="4.600" fill="#f6a532" stroke="#d48a1c" stroke-width=".6"/></g>
<path d="M282.500,214.500H287.500V204H292L285,195 278,204H282.500Z" fill="#4d7fc0" stroke="#2c568f" stroke-width=".9" stroke-linejoin="round"/>
<rect x="303.500" y="195.500" width="17.500" height="16.500" fill="#fafafa" stroke="#555" stroke-width="1.100"/><rect x="316" y="208.500" width="9.500" height="8.500" rx="2" fill="#e04848" stroke="#b82828" stroke-width=".7"/><path d="M318,212.750H323.500" stroke="#fff" stroke-width="1.800"/>
<path d="M387.200,200L397.500,203.300 395.200,206.500 386,203.800Z" fill="#f7e13a"/><path d="M386,203.800L395.200,206.500 393.500,209.300 385.200,207.500Z" fill="#5b8fd4"/><path d="M385.200,207.500L393.500,209.300 397,214 385.500,209.500Z" fill="#e8262a"/><path d="M399.300,206.300L405.600,200" stroke="#c88a34" stroke-width="3" stroke-linecap="round"/><path d="M399.300,206.300L405.600,200" stroke="#e2a64e" stroke-width="1.600" stroke-linecap="round"/><path d="M397,203.300L402,207.500 397.300,214.500 392.500,210.200Z" fill="#d6993e" stroke="#c08430" stroke-width=".6"/>
<g transform="translate(935,1052.500)"><g transform="rotate(-28 6 5.500)"><ellipse cx="6" cy="5.500" rx="3.600" ry="5.300" fill="#fff" stroke="#111" stroke-width="1.500"/><path d="M5,2V8M7.200,2V8" stroke="#111" stroke-width="1"/></g><path d="M3,8.500C1.500,12 4,16 8,16 12,16 14,12.500 12.500,9" fill="#f4f4f4" stroke="#111" stroke-width="1.600"/><ellipse cx="8.500" cy="11.500" rx="4" ry="3.200" fill="#fff" stroke="#111" stroke-width="1.300"/><circle cx="9" cy="11.500" r="1.300" fill="#111"/><path d="M10.500,3.500L14,1M1.500,11L0,12" stroke="#111" stroke-width="1" stroke-dasharray="1.200 1"/></g>
</svg>
</body></html>
